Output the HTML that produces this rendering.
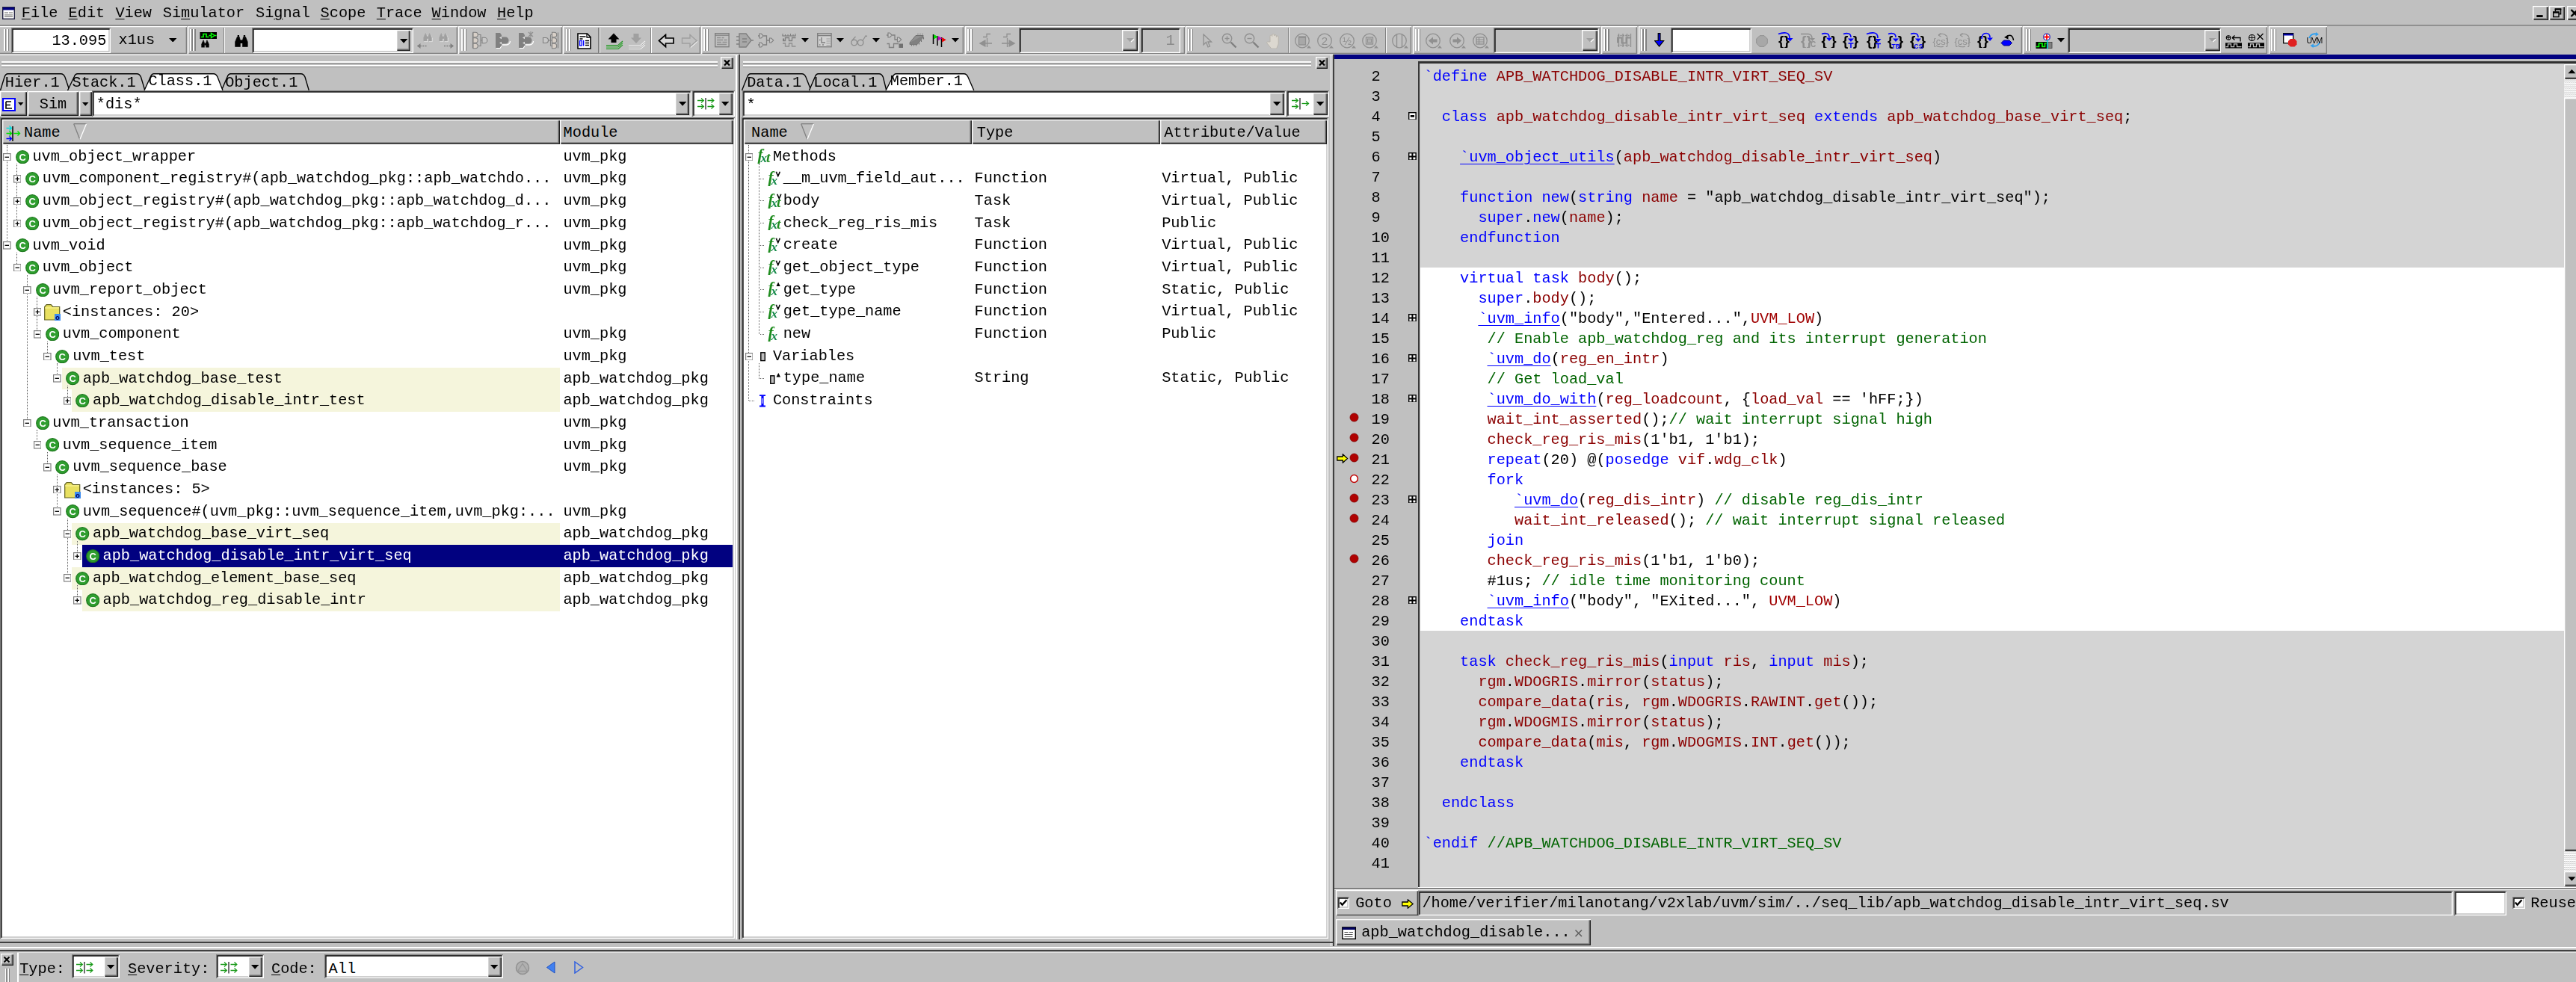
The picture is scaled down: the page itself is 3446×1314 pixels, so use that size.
<!DOCTYPE html><html><head><meta charset="utf-8"><title>DVE</title><style>
html,body{margin:0;padding:0;background:#c0c0c0;}
body{width:3446px;height:1314px;overflow:hidden;position:relative;font-family:"Liberation Mono",monospace;font-size:20.25px;color:#000;}
div{position:absolute;box-sizing:border-box;}
.t{white-space:pre;}
.sunk{border:1.35px solid;border-color:#808080 #fff #fff #808080;}
.sunk2{border:1.35px solid;border-color:#000 #c0c0c0 #c0c0c0 #000;}
.rais{border:1.35px solid;border-color:#fff #808080 #808080 #fff;}
.rais2{border:1.35px solid;border-color:#fff #000 #000 #fff;}
u{text-decoration:underline;text-underline-offset:2px;text-decoration-thickness:1.35px;}
.k{color:#0000ff}.i{color:#8b0000}.c{color:#006400}.m{color:#0000ff;text-decoration:underline;text-underline-offset:3px;text-decoration-thickness:1.35px}.r{color:#a00000}
</style></head><body><div id="root" style="left:0;top:0;width:3446px;height:1314px;opacity:0.999;overflow:hidden"><svg style="position:absolute;left:3.00px;top:9.00px;" width="17" height="17" viewBox="0 0 17 17"><rect x="0.7" y="0.7" width="15.6" height="15.6" fill="#fff" stroke="#202040" stroke-width="1.4"/><rect x="1" y="1" width="15" height="3.4" fill="#000080"/><path d="M3 8h5M9 8h5M3 11h11M3 13.5h11" stroke="#606060" stroke-width="1.2"/></svg><div class="t" style="left:28.80px;top:3.50px;height:27px;line-height:27px;"><u>F</u>ile</div><div class="t" style="left:91.60px;top:3.50px;height:27px;line-height:27px;"><u>E</u>dit</div><div class="t" style="left:154.40px;top:3.50px;height:27px;line-height:27px;"><u>V</u>iew</div><div class="t" style="left:217.80px;top:3.50px;height:27px;line-height:27px;">Si<u>m</u>ulator</div><div class="t" style="left:342.00px;top:3.50px;height:27px;line-height:27px;">Si<u>g</u>nal</div><div class="t" style="left:428.60px;top:3.50px;height:27px;line-height:27px;"><u>S</u>cope</div><div class="t" style="left:503.80px;top:3.50px;height:27px;line-height:27px;"><u>T</u>race</div><div class="t" style="left:577.60px;top:3.50px;height:27px;line-height:27px;"><u>W</u>indow</div><div class="t" style="left:665.00px;top:3.50px;height:27px;line-height:27px;"><u>H</u>elp</div><div class="" style="left:3387.70px;top:7.60px;width:21.50px;height:19.10px;background:#c0c0c0;box-shadow:inset 1.35px 1.35px 0 #fff,inset -1.35px -1.35px 0 #202020,inset -2.7px -2.7px 0 #808080;"></div><div class="" style="left:3409.60px;top:7.60px;width:21.50px;height:19.10px;background:#c0c0c0;box-shadow:inset 1.35px 1.35px 0 #fff,inset -1.35px -1.35px 0 #202020,inset -2.7px -2.7px 0 #808080;"></div><div class="" style="left:3433.80px;top:7.60px;width:21.50px;height:19.10px;background:#c0c0c0;box-shadow:inset 1.35px 1.35px 0 #fff,inset -1.35px -1.35px 0 #202020,inset -2.7px -2.7px 0 #808080;"></div><svg style="position:absolute;left:3387.70px;top:7.60px;" width="22" height="19" viewBox="0 0 22 19"><rect x="5.3" y="12.1" width="8.3" height="2.9" fill="#000"/></svg><svg style="position:absolute;left:3409.60px;top:7.60px;" width="22" height="19" viewBox="0 0 22 19"><path d="M8.4 7.4v-3.300h7.200v6.600h-2.300" fill="none" stroke="#000" stroke-width="1.400"/><rect x="7.700" y="3.300" width="8.600" height="2.200" fill="#000"/><rect x="5.700" y="8.200" width="7.300" height="6.400" fill="none" stroke="#000" stroke-width="1.400"/><rect x="5" y="7.400" width="8.700" height="2.300" fill="#000"/></svg><svg style="position:absolute;left:3433.80px;top:7.60px;" width="22" height="19" viewBox="0 0 22 19"><path d="M5.500 5l9 9M14.500 5l-9 9" stroke="#000" stroke-width="2.400"/></svg><div class="" style="left:0.00px;top:33.00px;width:3446.00px;height:1.60px;background:#909090"></div><div class="" style="left:0.00px;top:72.50px;width:3446.00px;height:1.60px;background:#fff"></div><div class="" style="left:-2.00px;top:35.00px;width:251.50px;height:37.10px;box-shadow:inset 1.35px 1.35px 0 #fff,inset -1.35px -1.35px 0 #808080;"></div><div class="" style="left:250.50px;top:35.00px;width:361.90px;height:37.10px;box-shadow:inset 1.35px 1.35px 0 #fff,inset -1.35px -1.35px 0 #808080;"></div><div class="" style="left:613.40px;top:35.00px;width:138.20px;height:37.10px;box-shadow:inset 1.35px 1.35px 0 #fff,inset -1.35px -1.35px 0 #808080;"></div><div class="" style="left:753.00px;top:35.00px;width:184.00px;height:37.10px;box-shadow:inset 1.35px 1.35px 0 #fff,inset -1.35px -1.35px 0 #808080;"></div><div class="" style="left:938.00px;top:35.00px;width:351.20px;height:37.10px;box-shadow:inset 1.35px 1.35px 0 #fff,inset -1.35px -1.35px 0 #808080;"></div><div class="" style="left:1290.60px;top:35.00px;width:294.00px;height:37.10px;box-shadow:inset 1.35px 1.35px 0 #fff,inset -1.35px -1.35px 0 #808080;"></div><div class="" style="left:1585.80px;top:35.00px;width:302.40px;height:37.10px;box-shadow:inset 1.35px 1.35px 0 #fff,inset -1.35px -1.35px 0 #808080;"></div><div class="" style="left:1889.60px;top:35.00px;width:251.60px;height:37.10px;box-shadow:inset 1.35px 1.35px 0 #fff,inset -1.35px -1.35px 0 #808080;"></div><div class="" style="left:2142.30px;top:35.00px;width:48.10px;height:37.10px;box-shadow:inset 1.35px 1.35px 0 #fff,inset -1.35px -1.35px 0 #808080;"></div><div class="" style="left:2191.80px;top:35.00px;width:513.40px;height:37.10px;box-shadow:inset 1.35px 1.35px 0 #fff,inset -1.35px -1.35px 0 #808080;"></div><div class="" style="left:2706.30px;top:35.00px;width:326.70px;height:37.10px;box-shadow:inset 1.35px 1.35px 0 #fff,inset -1.35px -1.35px 0 #808080;"></div><div class="" style="left:3034.60px;top:35.00px;width:78.60px;height:37.10px;box-shadow:inset 1.35px 1.35px 0 #fff,inset -1.35px -1.35px 0 #808080;"></div><div class="" style="left:4.90px;top:39.00px;width:2.00px;height:29.40px;background:#fff"></div><div class="" style="left:6.90px;top:39.00px;width:1.30px;height:29.40px;background:#808080"></div><div class="" style="left:9.00px;top:39.00px;width:2.00px;height:29.40px;background:#fff"></div><div class="" style="left:11.00px;top:39.00px;width:1.30px;height:29.40px;background:#808080"></div><div class="" style="left:254.30px;top:39.00px;width:2.00px;height:29.40px;background:#fff"></div><div class="" style="left:256.30px;top:39.00px;width:1.30px;height:29.40px;background:#808080"></div><div class="" style="left:258.40px;top:39.00px;width:2.00px;height:29.40px;background:#fff"></div><div class="" style="left:260.40px;top:39.00px;width:1.30px;height:29.40px;background:#808080"></div><div class="" style="left:617.10px;top:39.00px;width:2.00px;height:29.40px;background:#fff"></div><div class="" style="left:619.10px;top:39.00px;width:1.30px;height:29.40px;background:#808080"></div><div class="" style="left:621.20px;top:39.00px;width:2.00px;height:29.40px;background:#fff"></div><div class="" style="left:623.20px;top:39.00px;width:1.30px;height:29.40px;background:#808080"></div><div class="" style="left:756.50px;top:39.00px;width:2.00px;height:29.40px;background:#fff"></div><div class="" style="left:758.50px;top:39.00px;width:1.30px;height:29.40px;background:#808080"></div><div class="" style="left:760.60px;top:39.00px;width:2.00px;height:29.40px;background:#fff"></div><div class="" style="left:762.60px;top:39.00px;width:1.30px;height:29.40px;background:#808080"></div><div class="" style="left:941.10px;top:39.00px;width:2.00px;height:29.40px;background:#fff"></div><div class="" style="left:943.10px;top:39.00px;width:1.30px;height:29.40px;background:#808080"></div><div class="" style="left:945.20px;top:39.00px;width:2.00px;height:29.40px;background:#fff"></div><div class="" style="left:947.20px;top:39.00px;width:1.30px;height:29.40px;background:#808080"></div><div class="" style="left:1293.70px;top:39.00px;width:2.00px;height:29.40px;background:#fff"></div><div class="" style="left:1295.70px;top:39.00px;width:1.30px;height:29.40px;background:#808080"></div><div class="" style="left:1297.80px;top:39.00px;width:2.00px;height:29.40px;background:#fff"></div><div class="" style="left:1299.80px;top:39.00px;width:1.30px;height:29.40px;background:#808080"></div><div class="" style="left:1588.70px;top:39.00px;width:2.00px;height:29.40px;background:#fff"></div><div class="" style="left:1590.70px;top:39.00px;width:1.30px;height:29.40px;background:#808080"></div><div class="" style="left:1592.80px;top:39.00px;width:2.00px;height:29.40px;background:#fff"></div><div class="" style="left:1594.80px;top:39.00px;width:1.30px;height:29.40px;background:#808080"></div><div class="" style="left:1892.50px;top:39.00px;width:2.00px;height:29.40px;background:#fff"></div><div class="" style="left:1894.50px;top:39.00px;width:1.30px;height:29.40px;background:#808080"></div><div class="" style="left:1896.60px;top:39.00px;width:2.00px;height:29.40px;background:#fff"></div><div class="" style="left:1898.60px;top:39.00px;width:1.30px;height:29.40px;background:#808080"></div><div class="" style="left:2145.30px;top:39.00px;width:2.00px;height:29.40px;background:#fff"></div><div class="" style="left:2147.30px;top:39.00px;width:1.30px;height:29.40px;background:#808080"></div><div class="" style="left:2149.40px;top:39.00px;width:2.00px;height:29.40px;background:#fff"></div><div class="" style="left:2151.40px;top:39.00px;width:1.30px;height:29.40px;background:#808080"></div><div class="" style="left:2195.30px;top:39.00px;width:2.00px;height:29.40px;background:#fff"></div><div class="" style="left:2197.30px;top:39.00px;width:1.30px;height:29.40px;background:#808080"></div><div class="" style="left:2199.40px;top:39.00px;width:2.00px;height:29.40px;background:#fff"></div><div class="" style="left:2201.40px;top:39.00px;width:1.30px;height:29.40px;background:#808080"></div><div class="" style="left:2709.90px;top:39.00px;width:2.00px;height:29.40px;background:#fff"></div><div class="" style="left:2711.90px;top:39.00px;width:1.30px;height:29.40px;background:#808080"></div><div class="" style="left:2714.00px;top:39.00px;width:2.00px;height:29.40px;background:#fff"></div><div class="" style="left:2716.00px;top:39.00px;width:1.30px;height:29.40px;background:#808080"></div><div class="" style="left:3038.10px;top:39.00px;width:2.00px;height:29.40px;background:#fff"></div><div class="" style="left:3040.10px;top:39.00px;width:1.30px;height:29.40px;background:#808080"></div><div class="" style="left:3042.20px;top:39.00px;width:2.00px;height:29.40px;background:#fff"></div><div class="" style="left:3044.20px;top:39.00px;width:1.30px;height:29.40px;background:#808080"></div><div class="" style="left:15.00px;top:37.20px;width:133.00px;height:33.40px;background:#fff;box-shadow:inset 1.35px 1.35px 0 #808080,inset -1.35px -1.35px 0 #fff,inset 2.7px 2.7px 0 #101010,inset -2.7px -2.7px 0 #c0c0c0;"></div><div class="t" style="left:15.30px;top:40.50px;height:27px;line-height:27px;width:127px;text-align:right;">13.095</div><div class="t" style="left:158.50px;top:40.00px;height:27px;line-height:27px;">x1us</div><svg style="position:absolute;left:225.75px;top:50.70px;" width="10.5" height="5.6" viewBox="0 0 10.5 5.6"><polygon points="0,0 10.5,0 5.25,5.6" fill="#000"/></svg><svg style="position:absolute;left:267.00px;top:42.00px;" width="24" height="23" viewBox="0 0 24 23"><rect x="0.5" y="1" width="22.5" height="9" fill="#000"/><path d="M2 7.5h3v-4h4v4h3.5" stroke="#00ff00" stroke-width="1.7" fill="none"/><path d="M12.5 5.5h3M20.5 5.5h2" stroke="#00ff00" stroke-width="1.6"/><path d="M15.5 2.5v6l4.5-3z" fill="none" stroke="#00ff00" stroke-width="1.5"/><g transform="translate(1,10.5) scale(0.62)"><g transform="translate(0,0)" fill="#000" stroke="#000"><path d="M2.5 17.5 L2.5 11 L5 4.5 L8 4.5 L9 9 L9 17.5 Z" stroke-width="0.6"/><path d="M18.5 17.5 L18.5 11 L16 4.5 L13 4.5 L12 9 L12 17.5 Z" stroke-width="0.6"/><rect x="8.5" y="8.5" width="4" height="4.5" stroke="none"/><path d="M5.5 3h2.2M13.3 3h2.2" stroke-width="1.8" fill="none"/></g></g></svg><div class="" style="left:298.60px;top:36.50px;width:1.35px;height:34.30px;background:#808080"></div><div class="" style="left:299.95px;top:36.50px;width:1.35px;height:34.30px;background:#fff"></div><svg style="position:absolute;left:312.00px;top:44.50px;" width="22" height="20" viewBox="0 0 22 20"><g transform="scale(1.04,1.0)"><g transform="translate(0,0)" fill="#000" stroke="#000"><path d="M2.5 17.5 L2.5 11 L5 4.5 L8 4.5 L9 9 L9 17.5 Z" stroke-width="0.6"/><path d="M18.5 17.5 L18.5 11 L16 4.5 L13 4.5 L12 9 L12 17.5 Z" stroke-width="0.6"/><rect x="8.5" y="8.5" width="4" height="4.5" stroke="none"/><path d="M5.5 3h2.2M13.3 3h2.2" stroke-width="1.8" fill="none"/></g></g></svg><div class="" style="left:337.40px;top:37.20px;width:215.40px;height:33.40px;background:#fff;box-shadow:inset 1.35px 1.35px 0 #808080,inset -1.35px -1.35px 0 #fff,inset 2.7px 2.7px 0 #101010,inset -2.7px -2.7px 0 #c0c0c0;"></div><div class="" style="left:530.10px;top:40.00px;width:19.40px;height:28.40px;background:#c0c0c0;box-shadow:inset 1.35px 1.35px 0 #fff,inset -1.35px -1.35px 0 #202020,inset -2.7px -2.7px 0 #808080;"></div><svg style="position:absolute;left:534.70px;top:51.80px;" width="10.2" height="5.8" viewBox="0 0 10.2 5.8"><polygon points="0,0 10.2,0 5.1,5.8" fill="#000"/></svg><svg style="position:absolute;left:556.50px;top:43.00px;" width="24" height="24" viewBox="0 0 24 24"><g transform="translate(8,0) scale(0.68)"><g transform="translate(1.2,1.2)" fill="#e8e8e8" stroke="#e8e8e8"><path d="M2.5 17.5 L2.5 11 L5 4.5 L8 4.5 L9 9 L9 17.5 Z" stroke-width="0.6"/><path d="M18.5 17.5 L18.5 11 L16 4.5 L13 4.5 L12 9 L12 17.5 Z" stroke-width="0.6"/><rect x="8.5" y="8.5" width="4" height="4.5" stroke="none"/><path d="M5.5 3h2.2M13.3 3h2.2" stroke-width="1.8" fill="none"/></g><g transform="translate(0,0)" fill="#a0a0a0" stroke="#a0a0a0"><path d="M2.5 17.5 L2.5 11 L5 4.5 L8 4.5 L9 9 L9 17.5 Z" stroke-width="0.6"/><path d="M18.5 17.5 L18.5 11 L16 4.5 L13 4.5 L12 9 L12 17.5 Z" stroke-width="0.6"/><rect x="8.5" y="8.5" width="4" height="4.5" stroke="none"/><path d="M5.5 3h2.2M13.3 3h2.2" stroke-width="1.8" fill="none"/></g></g><path d="M1.5 18.5h12" stroke="#808080" stroke-width="1.3" stroke-dasharray="2 1.4"/><path d="M5.5 15l-4.5 3.5l4.5 3.5z" fill="#808080"/></svg><svg style="position:absolute;left:585.00px;top:43.00px;" width="24" height="24" viewBox="0 0 24 24"><g transform="translate(1,0) scale(0.68)"><g transform="translate(1.2,1.2)" fill="#e8e8e8" stroke="#e8e8e8"><path d="M2.5 17.5 L2.5 11 L5 4.5 L8 4.5 L9 9 L9 17.5 Z" stroke-width="0.6"/><path d="M18.5 17.5 L18.5 11 L16 4.5 L13 4.5 L12 9 L12 17.5 Z" stroke-width="0.6"/><rect x="8.5" y="8.5" width="4" height="4.5" stroke="none"/><path d="M5.5 3h2.2M13.3 3h2.2" stroke-width="1.8" fill="none"/></g><g transform="translate(0,0)" fill="#a0a0a0" stroke="#a0a0a0"><path d="M2.5 17.5 L2.5 11 L5 4.5 L8 4.5 L9 9 L9 17.5 Z" stroke-width="0.6"/><path d="M18.5 17.5 L18.5 11 L16 4.5 L13 4.5 L12 9 L12 17.5 Z" stroke-width="0.6"/><rect x="8.5" y="8.5" width="4" height="4.5" stroke="none"/><path d="M5.5 3h2.2M13.3 3h2.2" stroke-width="1.8" fill="none"/></g></g><path d="M9 18.5h12" stroke="#808080" stroke-width="1.3" stroke-dasharray="2 1.4"/><path d="M17.5 15l4.5 3.5l-4.5 3.5z" fill="#808080"/></svg><svg style="position:absolute;left:631.00px;top:42.00px;" width="22" height="24" viewBox="0 0 22 24"><path d="M1.5 1.5v21" stroke="#808080" stroke-width="1.3"/><path d="M2 1.2999999999999998h3a3.2 3.2 0 0 1 0 6.4h-3z" fill="#d8d0c8" stroke="#808080" stroke-width="1.1"/><path d="M2 8.8h3a3.2 3.2 0 0 1 0 6.4h-3z" fill="#d8d0c8" stroke="#808080" stroke-width="1.1"/><path d="M2 16.3h3a3.2 3.2 0 0 1 0 6.4h-3z" fill="#d8d0c8" stroke="#808080" stroke-width="1.1"/><path d="M9 4.5h3v15h-3M12 12h2" stroke="#808080" stroke-width="1.1" fill="none"/><path d="M14 8.2h3a3.8 3.8 0 0 1 0 7.6h-3z" fill="#c8c8c8" stroke="#808080" stroke-width="1.1"/></svg><svg style="position:absolute;left:662.00px;top:42.00px;" width="22" height="24" viewBox="0 0 22 24"><path d="M1 2h6l2 3v14l-2 3h-6z" fill="#808080"/><path d="M9 7.5h5a4.5 4.5 0 0 1 0 9h-5z" fill="#808080"/><path d="M10 18h5.5a5 5 0 0 0 5-5" stroke="#fff" stroke-width="1.3" fill="none"/><path d="M6 8.5l3-1.7v3.4zM6 15.5l3-1.7v3.4z" fill="#e0e0e0"/><path d="M2 22.5h5l2-3" stroke="#fff" stroke-width="1.2" fill="none"/></svg><svg style="position:absolute;left:693.00px;top:42.00px;" width="23" height="24" viewBox="0 0 23 24"><path d="M1 2h6l2 3v14l-2 3h-6z" fill="#808080"/><path d="M9 7.5h5a4.5 4.5 0 0 1 0 9h-5z" fill="#808080"/><path d="M10 18h5.5a5 5 0 0 0 5-5" stroke="#fff" stroke-width="1.3" fill="none"/><path d="M6 8.5l3-1.7v3.4zM6 15.5l3-1.7v3.4z" fill="#e0e0e0"/><path d="M2 22.5h5l2-3" stroke="#fff" stroke-width="1.2" fill="none"/><path d="M14 1l6 6M20 1l-6 6M17 0v8" stroke="#909090" stroke-width="1.2"/></svg><svg style="position:absolute;left:724.50px;top:42.00px;" width="23" height="24" viewBox="0 0 23 24"><path d="M1.5 8.5h3.5a3.5 3.5 0 0 1 0 7h-3.5z" fill="#c8c8c8" stroke="#808080" stroke-width="1.1"/><path d="M8.5 12h3M11.5 4.5v15M11.5 4.5h2M11.5 19.5h2M11.5 12h2" stroke="#808080" stroke-width="1.1" fill="none"/><path d="M13.5 1.2999999999999998h3a3.2 3.2 0 0 1 0 6.4h-3z" fill="#d8d0c8" stroke="#808080" stroke-width="1.1"/><path d="M13.5 8.8h3a3.2 3.2 0 0 1 0 6.4h-3z" fill="#d8d0c8" stroke="#808080" stroke-width="1.1"/><path d="M13.5 16.3h3a3.2 3.2 0 0 1 0 6.4h-3z" fill="#d8d0c8" stroke="#808080" stroke-width="1.1"/><path d="M21.5 1.5v21" stroke="#808080" stroke-width="1.2"/></svg><svg style="position:absolute;left:772.00px;top:43.50px;" width="20" height="22" viewBox="0 0 20 22"><path d="M1 1h12.5l4.5 4.5v15.5h-17z" fill="#fff" stroke="#000" stroke-width="1.6"/><path d="M13 1v5h5" fill="none" stroke="#000" stroke-width="1.3"/><path d="M3.5 5h8M3.5 8h4" stroke="#000" stroke-width="1.5"/><path d="M11 10.5h5M11 13.5h5M11 16.5h5" stroke="#000" stroke-width="1.3"/><rect x="3.6" y="10.5" width="2.6" height="6.5" fill="none" stroke="#0000ff" stroke-width="1.3"/><path d="M8.6 10v7.5" stroke="#0000ff" stroke-width="1.5"/></svg><div class="" style="left:800.40px;top:36.50px;width:1.35px;height:34.30px;background:#808080"></div><div class="" style="left:801.75px;top:36.50px;width:1.35px;height:34.30px;background:#fff"></div><svg style="position:absolute;left:809.50px;top:42.50px;" width="24" height="24" viewBox="0 0 24 24"><path d="M3.5 9.5l7.5-8l7.5 8h-4v4.5h-7v-4.5z" fill="#000"/><path d="M1 17.5h16l6-5.5M1 20h16l6-5.5M1 22.5h16l6-5.5" stroke="#228b22" stroke-width="1.2" fill="none"/><path d="M1 18.7h16l6-5.5M1 21.2h16l6-5.5" stroke="#90d090" stroke-width="1.0" fill="none"/></svg><svg style="position:absolute;left:840.00px;top:42.50px;" width="24" height="24" viewBox="0 0 24 24"><path d="M4 7.5l7 7.5l7-7.5h-3.500v-5.500h-7v5.500z" fill="#a0a0a0"/><path d="M1 17.5h16l6-5.5M1 20h16l6-5.5M1 22.5h16l6-5.5" stroke="#f0f0f0" stroke-width="1.2" fill="none"/><path d="M1 18.7h16l6-5.5M1 21.2h16l6-5.5" stroke="#b0b0b0" stroke-width="1.0" fill="none"/></svg><div class="" style="left:869.80px;top:36.50px;width:1.35px;height:34.30px;background:#808080"></div><div class="" style="left:871.15px;top:36.50px;width:1.35px;height:34.30px;background:#fff"></div><svg style="position:absolute;left:880.00px;top:44.50px;" width="23" height="20" viewBox="0 0 23 20"><path d="M1.5 9.5l9-8v4.5h10.5v7h-10.5v4.5z" fill="#d8d8d8" stroke="#000" stroke-width="1.7" stroke-linejoin="miter"/></svg><svg style="position:absolute;left:911.00px;top:44.50px;" width="23" height="20" viewBox="0 0 23 20"><path d="M21 9.5l-9-8v4.5h-10.5v7h10.5v4.5z" fill="none" stroke="#a0a0a0" stroke-width="1.4"/><path d="M22 10.5l-9 8" stroke="#fff" stroke-width="1"/></svg><svg style="position:absolute;left:956.00px;top:44.00px;" width="20" height="19.5" viewBox="0 0 20 19.5"><rect x="0.7" y="0.7" width="18.4" height="18" fill="none" stroke="#808080" stroke-width="1.4"/><path d="M1 3.2h18" stroke="#808080" stroke-width="1.2"/><path d="M3 6.5h5M9.5 6.5h3M3 9.5h8M12.5 9.5h4M3 12.5h6M10.5 12.5h6M3 15.5h13" stroke="#909090" stroke-width="1.5"/></svg><svg style="position:absolute;left:984.50px;top:43.50px;" width="23" height="20" viewBox="0 0 23 20"><path d="M4 1h9l7 9l-7 9h-9z" fill="#a8a8a8" stroke="#808080" stroke-width="1.4"/><path d="M0 5h4M0 10h4M0 15h4M20 10h3" stroke="#808080" stroke-width="1.3"/><path d="M8 8h6M8 12h6" stroke="#808080" stroke-width="1.5"/></svg><svg style="position:absolute;left:1014.00px;top:43.50px;" width="23" height="20" viewBox="0 0 23 20"><path d="M2 1.0h2.2l3.0 3.0l-3.0 3.0h-2.2z" fill="#c8c8c8" stroke="#808080" stroke-width="1.2"/><path d="M2 13.0h2.2l3.0 3.0l-3.0 3.0h-2.2z" fill="#c8c8c8" stroke="#808080" stroke-width="1.2"/><path d="M0 4h2M0 16h2M7.5 4h4v12h-4M11.5 10h4" stroke="#808080" stroke-width="1.3" fill="none"/><path d="M15.5 7.0h2.2l3.0 3.0l-3.0 3.0h-2.2z" fill="#c8c8c8" stroke="#808080" stroke-width="1.2"/></svg><svg style="position:absolute;left:1045.50px;top:43.50px;" width="19" height="20" viewBox="0 0 19 20"><path d="M0.5 4h18" stroke="#808080" stroke-width="1.2"/><path d="M1 1v3M4.5 2v2M8 2v2M11.5 1v3M15 2v2M18 1v3" stroke="#808080" stroke-width="1.1"/><path d="M1 10.5h3.5v-4h5v4h4v-4h5" stroke="#808080" stroke-width="1.3" fill="none"/><rect x="1" y="7.5" width="2.2" height="3" fill="#808080"/><path d="M1 14h3.5v4h5v-4h4v4h5" stroke="#909090" stroke-width="1.3" fill="none"/></svg><svg style="position:absolute;left:1072.20px;top:51.05px;" width="10" height="5.5" viewBox="0 0 10 5.5"><polygon points="0,0 10,0 5.0,5.5" fill="#000"/></svg><svg style="position:absolute;left:1092.60px;top:44.00px;" width="20" height="19.5" viewBox="0 0 20 19.5"><rect x="0.7" y="0.7" width="18.4" height="18" fill="#d0d0d0" stroke="#808080" stroke-width="1.4"/><path d="M1 3.5h18" stroke="#808080" stroke-width="1.6"/><path d="M6 6v7h5M3 9.5h1.5M3 16h1.5M7 16h2" stroke="#808080" stroke-width="1.4" fill="none"/><path d="M12.5 8h5M12.5 11h5M12.5 14h5M12.5 16.5h5" stroke="#a0a0a0" stroke-width="1.1"/></svg><svg style="position:absolute;left:1119.40px;top:51.05px;" width="10" height="5.5" viewBox="0 0 10 5.5"><polygon points="0,0 10,0 5.0,5.5" fill="#000"/></svg><svg style="position:absolute;left:1138.00px;top:45.50px;" width="23" height="16" viewBox="0 0 23 16"><circle cx="4.7" cy="11" r="3.8" fill="none" stroke="#909090" stroke-width="1.4"/><circle cx="13.2" cy="11" r="3.8" fill="none" stroke="#909090" stroke-width="1.4"/><path d="M8.3 10.5h1.4M1.5 8.5l5-5.5M16 8.5l4-6.5l2 0.5" stroke="#909090" stroke-width="1.3" fill="none"/></svg><svg style="position:absolute;left:1166.60px;top:51.05px;" width="10" height="5.5" viewBox="0 0 10 5.5"><polygon points="0,0 10,0 5.0,5.5" fill="#000"/></svg><svg style="position:absolute;left:1185.50px;top:43.00px;" width="23" height="22" viewBox="0 0 23 22"><path d="M2 1.0h2.2l3.0 3.0l-3.0 3.0h-2.2z" fill="#c8c8c8" stroke="#808080" stroke-width="1.2"/><path d="M0 4h2M7.5 4h3.5v6h4" stroke="#808080" stroke-width="1.3" fill="none"/><path d="M14.5 7.0h2.2l3.0 3.0l-3.0 3.0h-2.2z" fill="#c8c8c8" stroke="#808080" stroke-width="1.2"/><path d="M0.5 15.5h3v5h6v-5h6.5" stroke="#808080" stroke-width="1.3" fill="none"/><rect x="16.5" y="15.5" width="5.5" height="5.5" fill="#707070"/></svg><svg style="position:absolute;left:1215.50px;top:45.00px;" width="22" height="18" viewBox="0 0 22 18"><path d="M1 12l8-9.5h10l-8 9.5z" fill="#909090" stroke="#707070" stroke-width="1"/><path d="M1 12v2.5h10l8-9.5v-2.5" fill="#808080" stroke="#707070" stroke-width="0.8"/><path d="M3.5 14.5v2M6.5 14.5v2M9.5 14.5v2M13.5 12v2.5M16.5 8.5v2.5M19.5 5v2.5M11.5 1l1-1M14.5 1l1-1M17.5 1l1-1" stroke="#707070" stroke-width="1.1"/></svg><svg style="position:absolute;left:1246.50px;top:45.00px;" width="19" height="18" viewBox="0 0 19 18"><path d="M1.5 1v13M7 3v13M12.5 5v13" stroke="#000" stroke-width="1.5"/><path d="M2.2 1l5.5 3.2l-5.5 3.2z" fill="#00dd00"/><path d="M7.7 3l5.5 3.2l-5.5 3.2z" fill="#c000c0"/><path d="M13.2 5l5.5 3.2l-5.5 3.2z" fill="#ee0000"/></svg><svg style="position:absolute;left:1272.80px;top:51.05px;" width="10" height="5.5" viewBox="0 0 10 5.5"><polygon points="0,0 10,0 5.0,5.5" fill="#000"/></svg><svg style="position:absolute;left:1308.50px;top:43.00px;" width="19" height="22" viewBox="0 0 19 22"><path d="M6 6.5h5v-4h5" stroke="#909090" stroke-width="1.3" fill="none"/><path d="M0.5 15l9-5v10z" fill="#909090"/><path d="M9 15h9M11.5 8v12" stroke="#909090" stroke-width="1.3"/></svg><svg style="position:absolute;left:1338.50px;top:43.00px;" width="20" height="22" viewBox="0 0 20 22"><path d="M3 6.5h5v-4h5" stroke="#909090" stroke-width="1.3" fill="none"/><path d="M19.5 15l-9-5v10z" fill="#909090"/><path d="M1 15h10M8.5 8v12" stroke="#909090" stroke-width="1.3"/></svg><div class="" style="left:1363.20px;top:37.20px;width:160.50px;height:33.40px;background:#c0c0c0;box-shadow:inset 1.35px 1.35px 0 #808080,inset -1.35px -1.35px 0 #fff,inset 2.7px 2.7px 0 #101010,inset -2.7px -2.7px 0 #c0c0c0;"></div><div class="" style="left:1500.60px;top:40.20px;width:21.00px;height:27.80px;background:#c0c0c0;box-shadow:inset 1.35px 1.35px 0 #fff,inset -1.35px -1.35px 0 #202020,inset -2.7px -2.7px 0 #808080;"></div><svg style="position:absolute;left:1506.55px;top:51.40px;" width="9.5" height="5.2" viewBox="0 0 9.5 5.2"><polygon points="0,0 9.5,0 4.75,5.2" fill="#a0a0a0"/></svg><svg style="position:absolute;left:1511.50px;top:51.00px;" width="8" height="6" viewBox="0 0 8 6"><path d="M1 5l4-3.5" stroke="#fff" stroke-width="1.3"/></svg><div class="" style="left:1525.60px;top:37.20px;width:53.60px;height:33.40px;background:#c0c0c0;box-shadow:inset 1.35px 1.35px 0 #808080,inset -1.35px -1.35px 0 #fff,inset 2.7px 2.7px 0 #101010,inset -2.7px -2.7px 0 #c0c0c0;"></div><div class="t" style="left:1525.60px;top:40.50px;height:27px;line-height:27px;width:46px;text-align:right;color:#8a8a8a;">1</div><svg style="position:absolute;left:1609.00px;top:44.50px;" width="13" height="20" viewBox="0 0 13 20"><path d="M1 1v14l3.5-3.5l2.5 6.5l2.5-1l-2.5-6h4.5z" fill="none" stroke="#909090" stroke-width="1.3"/></svg><svg style="position:absolute;left:1633.50px;top:44.00px;" width="21" height="21" viewBox="0 0 21 21"><circle cx="7.5" cy="7.5" r="6.2" fill="none" stroke="#909090" stroke-width="1.4"/><path d="M12.5 12.5l7 7" stroke="#808080" stroke-width="2.4"/><path d="M4.5 7.5h6" stroke="#909090" stroke-width="1.4"/><path d="M7.5 4.5v6" stroke="#909090" stroke-width="1.4"/></svg><svg style="position:absolute;left:1663.50px;top:44.00px;" width="21" height="21" viewBox="0 0 21 21"><circle cx="7.5" cy="7.5" r="6.2" fill="none" stroke="#909090" stroke-width="1.4"/><path d="M12.5 12.5l7 7" stroke="#808080" stroke-width="2.4"/><path d="M4.5 7.5h6" stroke="#909090" stroke-width="1.4"/></svg><svg style="position:absolute;left:1692.50px;top:44.50px;" width="22" height="20" viewBox="0 0 22 20"><path d="M6 11v-7.5a1.4 1.4 0 0 1 2.8 0v-1.5a1.4 1.4 0 0 1 2.8 0v1a1.4 1.4 0 0 1 2.8 0v1.5a1.4 1.4 0 0 1 2.8 0v9.5l-2.5 6h-7l-6-7.5a1.5 1.5 0 0 1 2.3-1.5z" fill="#dcd8d0" stroke="#b8b4ac" stroke-width="1"/></svg><div class="" style="left:1722.60px;top:36.50px;width:1.35px;height:34.30px;background:#808080"></div><div class="" style="left:1723.95px;top:36.50px;width:1.35px;height:34.30px;background:#fff"></div><svg style="position:absolute;left:1732.00px;top:43.50px;" width="23" height="22" viewBox="0 0 23 22"><circle cx="10" cy="10.5" r="9.3" fill="none" stroke="#909090" stroke-width="1.3"/><path d="M16 20.5l3-3.5l3 3.5z" fill="#909090"/><rect x="5.5" y="5" width="9" height="11" fill="#a8a8a8" stroke="#909090" stroke-width="1.3"/><path d="M5.5 6h9" stroke="#909090" stroke-width="1.6"/></svg><svg style="position:absolute;left:1761.50px;top:43.50px;" width="23" height="22" viewBox="0 0 23 22"><circle cx="10" cy="10.5" r="9.3" fill="none" stroke="#909090" stroke-width="1.3"/><path d="M16 20.5l3-3.5l3 3.5z" fill="#909090"/><text x="10" y="16" font-size="15" text-anchor="middle" fill="#909090" font-family="Liberation Sans,sans-serif">2</text></svg><svg style="position:absolute;left:1791.50px;top:43.50px;" width="23" height="22" viewBox="0 0 23 22"><circle cx="10" cy="10.5" r="9.3" fill="none" stroke="#909090" stroke-width="1.3"/><path d="M16 20.5l3-3.5l3 3.5z" fill="#909090"/><text x="10" y="15.5" font-size="14" text-anchor="middle" fill="#909090" font-family="Liberation Sans,sans-serif">½</text></svg><svg style="position:absolute;left:1821.50px;top:43.50px;" width="23" height="22" viewBox="0 0 23 22"><circle cx="10" cy="10.5" r="9.3" fill="none" stroke="#909090" stroke-width="1.3"/><path d="M16 20.5l3-3.5l3 3.5z" fill="#909090"/><rect x="5.5" y="6" width="9" height="9" fill="none" stroke="#909090" stroke-width="1.3"/><rect x="7.5" y="8" width="5" height="5" fill="#b0b0b0" stroke="#909090" stroke-width="1"/></svg><div class="" style="left:1852.60px;top:36.50px;width:1.35px;height:34.30px;background:#808080"></div><div class="" style="left:1853.95px;top:36.50px;width:1.35px;height:34.30px;background:#fff"></div><svg style="position:absolute;left:1862.00px;top:43.50px;" width="23" height="22" viewBox="0 0 23 22"><circle cx="10" cy="10.5" r="9.3" fill="none" stroke="#909090" stroke-width="1.3"/><path d="M16 20.5l3-3.5l3 3.5z" fill="#909090"/><path d="M6.5 2v17M13.5 2v17" stroke="#909090" stroke-width="1.4"/></svg><svg style="position:absolute;left:1906.50px;top:43.50px;" width="23" height="22" viewBox="0 0 23 22"><circle cx="10" cy="10.5" r="9.3" fill="none" stroke="#909090" stroke-width="1.3"/><path d="M16 20.5l3-3.5l3 3.5z" fill="#909090"/><path d="M4 10.5l6-5v3h5.5v4h-5.5v3z" fill="#909090"/></svg><svg style="position:absolute;left:1939.00px;top:43.50px;" width="23" height="22" viewBox="0 0 23 22"><circle cx="10" cy="10.5" r="9.3" fill="none" stroke="#909090" stroke-width="1.3"/><path d="M16 20.5l3-3.5l3 3.5z" fill="#909090"/><path d="M16 10.5l-6-5v3h-5.5v4h5.5v3z" fill="#909090"/></svg><svg style="position:absolute;left:1970.00px;top:43.50px;" width="23" height="22" viewBox="0 0 23 22"><circle cx="10" cy="10.5" r="9.3" fill="none" stroke="#909090" stroke-width="1.3"/><path d="M16 20.5l3-3.5l3 3.5z" fill="#909090"/><rect x="5" y="6" width="10" height="9" fill="none" stroke="#909090" stroke-width="1.3"/><path d="M5 9h10M5 12h10M8.5 6v9" stroke="#909090" stroke-width="1.2"/></svg><div class="" style="left:1998.40px;top:37.20px;width:140.40px;height:33.40px;background:#c0c0c0;box-shadow:inset 1.35px 1.35px 0 #808080,inset -1.35px -1.35px 0 #fff,inset 2.7px 2.7px 0 #101010,inset -2.7px -2.7px 0 #c0c0c0;"></div><div class="" style="left:2116.20px;top:40.20px;width:21.00px;height:27.80px;background:#c0c0c0;box-shadow:inset 1.35px 1.35px 0 #fff,inset -1.35px -1.35px 0 #202020,inset -2.7px -2.7px 0 #808080;"></div><svg style="position:absolute;left:2122.05px;top:51.40px;" width="9.5" height="5.2" viewBox="0 0 9.5 5.2"><polygon points="0,0 9.5,0 4.75,5.2" fill="#a0a0a0"/></svg><svg style="position:absolute;left:2126.50px;top:51.00px;" width="8" height="6" viewBox="0 0 8 6"><path d="M1 5l4-3.5" stroke="#fff" stroke-width="1.3"/></svg><svg style="position:absolute;left:2163.00px;top:44.00px;" width="20" height="20" viewBox="0 0 20 20"><path d="M1 3.5h18M1 16.5h18" stroke="#909090" stroke-width="1.3" stroke-dasharray="2.2 1.2"/><path d="M1 13.5v-7h5.5v7h6v-7h6.5" stroke="#909090" stroke-width="2" fill="none"/><path d="M2.5 1v18M8 1v18M13.5 1v18M18.5 1v18" stroke="#909090" stroke-width="1.3"/></svg><svg style="position:absolute;left:2213.00px;top:43.50px;" width="14" height="19" viewBox="0 0 14 19"><path d="M5.2 0.6h2.800v9.900h4.600l-6 7.500l-6-7.500h4.600z" fill="#0000ff" stroke="#000" stroke-width="1.2"/></svg><div class="" style="left:2235.00px;top:37.20px;width:107.60px;height:33.40px;background:#fff;box-shadow:inset 1.35px 1.35px 0 #808080,inset -1.35px -1.35px 0 #fff,inset 2.7px 2.7px 0 #101010,inset -2.7px -2.7px 0 #c0c0c0;"></div><svg style="position:absolute;left:2349.00px;top:46.50px;" width="16" height="16" viewBox="0 0 16 16"><path d="M5 0.7h6l4.3 4.3v6l-4.3 4.3h-6l-4.3-4.3v-6z" fill="#a8a8a8" stroke="#909090" stroke-width="1"/></svg><svg style="position:absolute;left:2377.50px;top:43.00px;" width="22" height="21" viewBox="0 0 22 21"><text x="1" y="18" font-size="19" font-weight="bold" fill="#000" font-family="Liberation Sans,sans-serif" letter-spacing="0">{}</text><path d="M1 2.5q5-2 10-1.5q5 0.5 5 7" stroke="#0000ff" stroke-width="1.6" fill="none"/><path d="M12.5 8h8l-4 4.5z" fill="#0000ff"/></svg><svg style="position:absolute;left:2407.50px;top:43.00px;" width="22" height="21" viewBox="0 0 22 21"><text x="1" y="18" font-size="19" font-weight="bold" fill="#909090" font-family="Liberation Sans,sans-serif" letter-spacing="0">{}</text><path d="M1 2.5h10q5 0.5 5 6" stroke="#909090" stroke-width="1.4" fill="none"/><path d="M13 8h7l-3.5 4z" fill="#909090"/><text x="14" y="20" font-size="10" font-weight="bold" fill="#909090" font-family="Liberation Sans,sans-serif">C</text></svg><svg style="position:absolute;left:2435.50px;top:43.00px;" width="22" height="21" viewBox="0 0 22 21"><text x="0.5" y="18" font-size="19" font-weight="bold" fill="#000" font-family="Liberation Sans,sans-serif" letter-spacing="0">{ }</text><path d="M1 2.5q4-1.5 7-0.5q3 1 3 5" stroke="#0000ff" stroke-width="1.6" fill="none"/><path d="M7 7.5h8l-4 4.5z" fill="#0000ff"/></svg><svg style="position:absolute;left:2465.00px;top:43.00px;" width="23" height="22" viewBox="0 0 23 22"><text x="0" y="18" font-size="19" font-weight="bold" fill="#000" font-family="Liberation Sans,sans-serif" letter-spacing="0.5">{ }</text><path d="M1 2.5q4-1.5 7-0.5q3 1 3 5" stroke="#0000ff" stroke-width="1.6" fill="none"/><path d="M7 8.5h8l-4 4.5z" fill="#0000ff"/><path d="M7.5 15h7M11 15v6" stroke="#0000ff" stroke-width="1.6"/></svg><svg style="position:absolute;left:2496.00px;top:43.00px;" width="23" height="22" viewBox="0 0 23 22"><text x="1" y="18" font-size="19" font-weight="bold" fill="#000" font-family="Liberation Sans,sans-serif" letter-spacing="0">{}</text><path d="M1 2.5q5-2 10-1.5q5 0.5 5 7" stroke="#0000ff" stroke-width="1.6" fill="none"/><path d="M12.5 9h8l-4 4.5z" fill="#0000ff"/><path d="M13 15.5h7M16.5 15.5v6" stroke="#0000ff" stroke-width="1.6"/></svg><svg style="position:absolute;left:2524.50px;top:43.00px;" width="23" height="22" viewBox="0 0 23 22"><text x="0" y="18" font-size="19" font-weight="bold" fill="#000" font-family="Liberation Sans,sans-serif" letter-spacing="0.5">{ }</text><path d="M1 2.5q4-1.5 7-0.5q3 1 3 5" stroke="#0000ff" stroke-width="1.6" fill="none"/><path d="M7 8.5h8l-4 4.5z" fill="#0000ff"/><text x="5.5" y="21.5" font-size="8.5" font-weight="bold" fill="#0000ff" font-family="Liberation Sans,sans-serif">TB</text></svg><svg style="position:absolute;left:2554.50px;top:43.00px;" width="23" height="22" viewBox="0 0 23 22"><text x="0" y="18" font-size="19" font-weight="bold" fill="#000" font-family="Liberation Sans,sans-serif" letter-spacing="0.5">{ }</text><path d="M1 2.5q4-1.5 7-0.5q3 1 3 5" stroke="#0000ff" stroke-width="1.6" fill="none"/><path d="M7 8.5h8l-4 4.5z" fill="#0000ff"/><text x="5.5" y="21.5" font-size="8.5" font-weight="bold" fill="#0000ff" font-family="Liberation Sans,sans-serif">CS</text></svg><svg style="position:absolute;left:2584.50px;top:43.00px;" width="23" height="22" viewBox="0 0 23 22"><text x="0.5" y="16.5" font-size="13" fill="#909090" font-family="Liberation Sans,sans-serif">{cs}</text><path d="M8 4q6-4 11 1q3 5 0 11M8 4l3.5-2.5M8 4l3.5 2M5 18q5 3 10 1" stroke="#909090" stroke-width="1.1" fill="none"/></svg><svg style="position:absolute;left:2614.00px;top:43.00px;" width="23" height="22" viewBox="0 0 23 22"><text x="0.5" y="16.5" font-size="13" fill="#909090" font-family="Liberation Sans,sans-serif">{cs}</text><path d="M8 4q6-4 11 1q3 5 0 11M8 4l3.5-2.5M8 4l3.5 2M5 18q5 3 10 1" stroke="#909090" stroke-width="1.1" fill="none"/></svg><svg style="position:absolute;left:2643.50px;top:43.00px;" width="23" height="21" viewBox="0 0 23 21"><text x="1" y="18" font-size="19" font-weight="bold" fill="#000" font-family="Liberation Sans,sans-serif" letter-spacing="0">{}</text><path d="M7 9q0-7.5 6-7.5q5 0 5 6" stroke="#0000ff" stroke-width="1.6" fill="none"/><path d="M14 7.5h8l-4 4.5z" fill="#0000ff"/></svg><svg style="position:absolute;left:2676.00px;top:43.50px;" width="19" height="21" viewBox="0 0 19 21"><path d="M4.5 10h7.5l3.5 3.5l-3.5 3.5h-7.500l-3.5-3.5z" fill="#0000ff" stroke="#000080" stroke-width="1"/><path d="M8 5q8-5 9.5 5" stroke="#000" stroke-width="1.5" fill="none"/><path d="M5 6l5.5-3.500v6z" fill="#000"/></svg><svg style="position:absolute;left:2723.00px;top:43.50px;" width="23" height="22" viewBox="0 0 23 22"><circle cx="15" cy="5.5" r="4.3" fill="#fff" stroke="#3030c0" stroke-width="1.3"/><path d="M15 2v7M11.500 5.500h7" stroke="#ff0000" stroke-width="1.8"/><rect x="0.5" y="12" width="15" height="9" fill="#000"/><path d="M1 18.500h3.500v-4.500h4.500v4.500h3.500v-4.500h2" stroke="#00ff00" stroke-width="1.7" fill="none"/><rect x="16.5" y="12.5" width="5.500" height="8" fill="#808080" stroke="#404040" stroke-width="0.800"/><path d="M15.700 9.500v12" stroke="#00e0e0" stroke-width="1.500"/></svg><svg style="position:absolute;left:2751.80px;top:51.05px;" width="10" height="5.5" viewBox="0 0 10 5.5"><polygon points="0,0 10,0 5.0,5.5" fill="#000"/></svg><div class="" style="left:2766.30px;top:37.20px;width:205.20px;height:33.40px;background:#c0c0c0;box-shadow:inset 1.35px 1.35px 0 #808080,inset -1.35px -1.35px 0 #fff,inset 2.7px 2.7px 0 #101010,inset -2.7px -2.7px 0 #c0c0c0;"></div><div class="" style="left:2948.70px;top:40.20px;width:21.40px;height:27.80px;background:#c0c0c0;box-shadow:inset 1.35px 1.35px 0 #fff,inset -1.35px -1.35px 0 #202020,inset -2.7px -2.7px 0 #808080;"></div><svg style="position:absolute;left:2954.65px;top:51.40px;" width="9.5" height="5.2" viewBox="0 0 9.5 5.2"><polygon points="0,0 9.5,0 4.75,5.2" fill="#a0a0a0"/></svg><svg style="position:absolute;left:2958.70px;top:51.00px;" width="8" height="6" viewBox="0 0 8 6"><path d="M1 5l4-3.500" stroke="#fff" stroke-width="1.300"/></svg><svg style="position:absolute;left:2977.00px;top:46.00px;" width="22" height="19" viewBox="0 0 22 19"><rect x="0" y="11.300" width="22" height="7.200" fill="#000"/><path d="M0.500 16.700h3v-3.800h4v3.800h4v-3.800h4v3.800h6" stroke="#c0c0c0" stroke-width="1.300" fill="none"/><circle cx="4" cy="4.500" r="2.800" fill="none" stroke="#000" stroke-width="1.100"/><path d="M4 1.500v6M1 4.500h6" stroke="#000" stroke-width="0.900"/><path d="M9 4.500h11v5M9 4.500l3.500-3M9 4.500l3.500 3" stroke="#000" stroke-width="1.300" fill="none"/></svg><svg style="position:absolute;left:3007.00px;top:44.00px;" width="23" height="21" viewBox="0 0 23 21"><g transform="translate(0,2)"><rect x="0" y="11.300" width="22" height="7.200" fill="#000"/><path d="M0.500 16.700h3v-3.800h4v3.800h4v-3.800h4v3.800h6" stroke="#c0c0c0" stroke-width="1.300" fill="none"/></g><circle cx="5.500" cy="6.500" r="4" fill="none" stroke="#000" stroke-width="1.100"/><path d="M5.500 2v9M1 6.500h9" stroke="#000" stroke-width="0.900"/><path d="M12.500 1l8 8M20.500 1l-8 8" stroke="#000" stroke-width="1.300"/></svg><svg style="position:absolute;left:3054.00px;top:43.50px;" width="19" height="19" viewBox="0 0 19 19"><rect x="0.700" y="0.700" width="13" height="13" fill="#fff" stroke="#000" stroke-width="1.300"/><rect x="0.500" y="0.500" width="13.500" height="3" fill="#0000c0"/><path d="M0 1h14" stroke="#000" stroke-width="1.200"/><path d="M10 8h5.500l3 3v4.500l-3 3h-5.500l-3-3v-4.500z" fill="#e02020"/></svg><svg style="position:absolute;left:3084.50px;top:43.00px;" width="23" height="21" viewBox="0 0 23 21"><path d="M4 8q3-7 10-5.500" stroke="#30a0f0" stroke-width="1.800" fill="none"/><path d="M13 0l4 3l-4.500 2.500z" fill="#30a0f0"/><path d="M18.500 13q-3 7-10 5.500" stroke="#30a0f0" stroke-width="1.800" fill="none"/><path d="M9.500 21l-4-3l4.500-2.500z" fill="#30a0f0"/><text x="11" y="14.500" font-size="10.500" text-anchor="middle" fill="#000" font-family="Liberation Sans,sans-serif" letter-spacing="-0.8">UVM</text></svg><div class="" style="left:2.00px;top:82.30px;width:958.00px;height:1.80px;background:#fff"></div><div class="" style="left:2.00px;top:84.10px;width:958.00px;height:1.30px;background:#808080"></div><div class="" style="left:2.00px;top:86.80px;width:958.00px;height:1.80px;background:#fff"></div><div class="" style="left:2.00px;top:88.60px;width:958.00px;height:1.30px;background:#808080"></div><div class="" style="left:964.30px;top:76.40px;width:17.00px;height:16.00px;background:#c0c0c0;box-shadow:inset 1.35px 1.35px 0 #fff,inset -1.35px -1.35px 0 #202020,inset -2.7px -2.7px 0 #808080;"></div><svg style="position:absolute;left:964.30px;top:76.40px;" width="17" height="16" viewBox="0 0 17 16"><path d="M5 4.500l7 7M12 4.500l-7 7" stroke="#000" stroke-width="2.300"/></svg><svg style="position:absolute;left:0;top:98.2px;overflow:visible" width="10" height="23.00"><path d="M0.50 23.00 L6.00 5.0 Q7.30 0.700 10.70 0.700 L81.50 0.700 Q85.10 0.700 86.90 5.0 L93.00 23.00" fill="#c0c0c0" stroke="#000" stroke-width="1.350"/></svg><div class="t" style="left:6.80px;top:98.50px;height:24px;line-height:24px;">Hier.1</div><svg style="position:absolute;left:0;top:98.2px;overflow:visible" width="10" height="23.00"><path d="M90.50 23.00 L99.10 5.0 Q100.40 0.700 103.80 0.700 L183.10 0.700 Q186.70 0.700 188.50 5.0 L193.90 23.00" fill="#c0c0c0" stroke="#000" stroke-width="1.350"/></svg><div class="t" style="left:96.60px;top:98.50px;height:24px;line-height:24px;">Stack.1</div><svg style="position:absolute;left:0;top:98.2px;overflow:visible" width="10" height="23.00"><path d="M296.30 23.00 L304.00 5.0 Q305.30 0.700 308.70 0.700 L402.60 0.700 Q406.20 0.700 408.00 5.0 L413.30 23.00" fill="#c0c0c0" stroke="#000" stroke-width="1.350"/></svg><div class="t" style="left:301.20px;top:98.50px;height:24px;line-height:24px;">Object.1</div><svg style="position:absolute;left:0;top:98.2px;overflow:visible" width="10" height="23.00"><path d="M193.00 23.00 L201.30 5.0 Q202.60 0.700 206.00 0.700 L285.60 0.700 Q289.20 0.700 291.00 5.0 L298.00 23.00" fill="#fff" stroke="#000" stroke-width="1.350"/></svg><div class="t" style="left:198.40px;top:97.20px;height:24px;line-height:24px;">Class.1</div><div class="" style="left:0.00px;top:121.60px;width:36.00px;height:33.60px;background:#c0c0c0;box-shadow:inset 1.35px 1.35px 0 #fff,inset -1.35px -1.35px 0 #202020,inset -2.7px -2.7px 0 #808080;"></div><svg style="position:absolute;left:3.40px;top:130.80px;" width="18" height="18" viewBox="0 0 18 18"><rect x="1" y="1" width="16" height="16" fill="#fff" stroke="#0000ff" stroke-width="2"/><path d="M5 5v9h8M5 9.500h6M5 5h7" stroke="#000" stroke-width="1.600" fill="none"/></svg><svg style="position:absolute;left:24.25px;top:137.40px;" width="7.5" height="4.2" viewBox="0 0 7.5 4.2"><polygon points="0,0 7.5,0 3.75,4.2" fill="#000"/></svg><div class="" style="left:36.70px;top:121.60px;width:68.50px;height:33.60px;background:#c0c0c0;box-shadow:inset 1.35px 1.35px 0 #fff,inset -1.35px -1.35px 0 #202020,inset -2.7px -2.7px 0 #808080;"></div><div class="t" style="left:52.80px;top:125.50px;height:27px;line-height:27px;">Sim</div><div class="" style="left:106.00px;top:121.60px;width:16.50px;height:33.60px;background:#c0c0c0;box-shadow:inset 1.35px 1.35px 0 #fff,inset -1.35px -1.35px 0 #202020,inset -2.7px -2.7px 0 #808080;"></div><svg style="position:absolute;left:110.05px;top:137.10px;" width="8.5" height="4.8" viewBox="0 0 8.5 4.8"><polygon points="0,0 8.5,0 4.25,4.8" fill="#000"/></svg><div class="" style="left:122.80px;top:121.40px;width:801.80px;height:34.90px;background:#fff;box-shadow:inset 1.35px 1.35px 0 #808080,inset -1.35px -1.35px 0 #fff,inset 2.7px 2.7px 0 #101010,inset -2.7px -2.7px 0 #c0c0c0;"></div><div class="t" style="left:128.80px;top:125.50px;height:27px;line-height:27px;">*dis*</div><div class="" style="left:902.90px;top:124.00px;width:19.40px;height:29.70px;background:#c0c0c0;box-shadow:inset 1.35px 1.35px 0 #fff,inset -1.35px -1.35px 0 #202020,inset -2.7px -2.7px 0 #808080;"></div><svg style="position:absolute;left:907.50px;top:136.45px;" width="10.2" height="5.8" viewBox="0 0 10.2 5.8"><polygon points="0,0 10.2,0 5.1,5.8" fill="#000"/></svg><div class="" style="left:926.10px;top:121.40px;width:56.50px;height:34.90px;background:#fff;box-shadow:inset 1.35px 1.35px 0 #808080,inset -1.35px -1.35px 0 #fff,inset 2.7px 2.7px 0 #101010,inset -2.7px -2.7px 0 #c0c0c0;"></div><svg style="position:absolute;left:931.50px;top:130.30px;" width="26" height="17" viewBox="0 0 26 17"><path d="M1 4.500h8M1 12.500h8" stroke="#1a9a1a" stroke-width="1.300"/><path d="M6 1.500l3.300 3l-3.300 3M6 9.500l3.300 3l-3.300 3" stroke="#1a9a1a" stroke-width="1.300" fill="none"/><path d="M12 1v15.500" stroke="#333" stroke-width="1.400"/><path d="M14.500 4.500h8M14.500 12.500h8" stroke="#1a9a1a" stroke-width="1.300"/><path d="M19.500 1.500l3.300 3l-3.300 3M19.500 9.500l3.300 3l-3.300 3" stroke="#1a9a1a" stroke-width="1.300" fill="none"/></svg><div class="" style="left:960.60px;top:124.00px;width:19.60px;height:29.70px;background:#c0c0c0;box-shadow:inset 1.35px 1.35px 0 #fff,inset -1.35px -1.35px 0 #202020,inset -2.7px -2.7px 0 #808080;"></div><svg style="position:absolute;left:965.30px;top:136.45px;" width="10.2" height="5.8" viewBox="0 0 10.2 5.8"><polygon points="0,0 10.2,0 5.1,5.8" fill="#000"/></svg><div class="" style="left:0.00px;top:157.20px;width:983.00px;height:1099.00px;background:#fff;box-shadow:inset 1.35px 1.35px 0 #808080,inset -1.35px -1.35px 0 #fff,inset 2.7px 2.7px 0 #101010,inset -2.7px -2.7px 0 #c0c0c0;"></div><div class="" style="left:2.70px;top:159.80px;width:746.00px;height:33.50px;background:#c0c0c0;box-shadow:inset 1.35px 1.35px 0 #fff,inset -1.35px -1.35px 0 #202020,inset -2.7px -2.7px 0 #808080;"></div><div class="t" style="left:32.00px;top:163.60px;height:27px;line-height:27px;">Name</div><svg style="position:absolute;left:98.20px;top:164.80px;" width="19" height="23" viewBox="0 0 19 23"><path d="M0.700 0.700h17" stroke="#808080" stroke-width="1.300"/><path d="M0.700 0.700l8 20.500" stroke="#808080" stroke-width="1.300"/><path d="M17.500 0.700l-8.500 20.500" stroke="#fff" stroke-width="1.300"/></svg><div class="" style="left:748.70px;top:159.80px;width:232.00px;height:33.50px;background:#c0c0c0;box-shadow:inset 1.35px 1.35px 0 #fff,inset -1.35px -1.35px 0 #202020,inset -2.7px -2.7px 0 #808080;"></div><div class="t" style="left:753.60px;top:163.60px;height:27px;line-height:27px;">Module</div><svg style="position:absolute;left:8.20px;top:168.30px;" width="20" height="21" viewBox="0 0 20 21"><path d="M0.500 3.500h7M4.500 0.500l3 3l-3 3" stroke="#00e0e0" stroke-width="1.400" fill="none"/><path d="M0.500 10.500h7M4.500 7.500l3 3l-3 3" stroke="#00e000" stroke-width="1.400" fill="none"/><path d="M0.500 17.500h7M4.500 14.500l3 3l-3 3" stroke="#0000ff" stroke-width="1.400" fill="none"/><path d="M9 1v20" stroke="#000" stroke-width="1.500"/><path d="M10.500 10.500h8M15.500 7.500l3 3l-3 3" stroke="#00e000" stroke-width="1.400" fill="none"/></svg><div class="" style="left:82.95px;top:491.76px;width:665.75px;height:29.68px;background:#f5f5dc;"></div><div class="" style="left:96.40px;top:521.44px;width:652.30px;height:29.68px;background:#f5f5dc;"></div><div class="" style="left:96.40px;top:699.52px;width:652.30px;height:29.68px;background:#f5f5dc;"></div><div class="" style="left:109.55px;top:729.20px;width:870.75px;height:29.68px;background:#000080;"></div><div class="" style="left:96.40px;top:758.88px;width:652.30px;height:29.68px;background:#f5f5dc;"></div><div class="" style="left:109.85px;top:788.56px;width:638.85px;height:29.68px;background:#f5f5dc;"></div><div class="" style="left:8.82px;top:194.00px;width:0.00px;height:129.52px;border-left:1.350px dotted #606060;"></div><div class="" style="left:22.27px;top:219.30px;width:0.00px;height:74.54px;border-left:1.350px dotted #606060;"></div><div class="" style="left:22.27px;top:338.02px;width:0.00px;height:15.18px;border-left:1.350px dotted #606060;"></div><div class="" style="left:35.73px;top:367.70px;width:0.00px;height:193.26px;border-left:1.350px dotted #606060;"></div><div class="" style="left:49.17px;top:397.38px;width:0.00px;height:44.86px;border-left:1.350px dotted #606060;"></div><div class="" style="left:62.62px;top:456.74px;width:0.00px;height:15.18px;border-left:1.350px dotted #606060;"></div><div class="" style="left:76.08px;top:486.42px;width:0.00px;height:15.18px;border-left:1.350px dotted #606060;"></div><div class="" style="left:89.52px;top:516.10px;width:0.00px;height:15.18px;border-left:1.350px dotted #606060;"></div><div class="" style="left:49.17px;top:575.46px;width:0.00px;height:15.18px;border-left:1.350px dotted #606060;"></div><div class="" style="left:62.62px;top:605.14px;width:0.00px;height:15.18px;border-left:1.350px dotted #606060;"></div><div class="" style="left:76.08px;top:634.82px;width:0.00px;height:44.86px;border-left:1.350px dotted #606060;"></div><div class="" style="left:89.52px;top:694.18px;width:0.00px;height:74.54px;border-left:1.350px dotted #606060;"></div><div class="" style="left:102.97px;top:723.86px;width:0.00px;height:15.18px;border-left:1.350px dotted #606060;"></div><div class="" style="left:102.97px;top:783.22px;width:0.00px;height:15.18px;border-left:1.350px dotted #606060;"></div><svg style="position:absolute;left:4.20px;top:204.50px;" width="10.6" height="10.6" viewBox="0 0 10.6 10.6"><rect x="0.600" y="0.600" width="9.400" height="9.400" fill="#fff" stroke="#808080" stroke-width="1.200"/><path d="M2.600 5.300h5.400" stroke="#000" stroke-width="1.300"/></svg><svg style="position:absolute;left:20.60px;top:200.60px;" width="18.4" height="18.4" viewBox="0 0 18.4 18.4"><circle cx="9.200" cy="9.200" r="8.500" fill="#2f9e2f" stroke="#1f7a1f" stroke-width="1.200"/><text x="9.200" y="13.800" font-size="13" font-weight="bold" text-anchor="middle" fill="#fff" font-family="Liberation Sans,sans-serif">C</text></svg><div class="t" style="left:43.40px;top:195.80px;height:27px;line-height:27px;">uvm_object_wrapper</div><div class="t" style="left:753.40px;top:195.80px;height:27px;line-height:27px;">uvm_pkg</div><svg style="position:absolute;left:17.65px;top:234.18px;" width="10.6" height="10.6" viewBox="0 0 10.6 10.6"><rect x="0.600" y="0.600" width="9.400" height="9.400" fill="#fff" stroke="#808080" stroke-width="1.200"/><path d="M2.600 5.300h5.400" stroke="#000" stroke-width="1.300"/><path d="M5.300 2.600v5.400" stroke="#000" stroke-width="1.300"/></svg><svg style="position:absolute;left:34.05px;top:230.28px;" width="18.4" height="18.4" viewBox="0 0 18.4 18.4"><circle cx="9.200" cy="9.200" r="8.500" fill="#2f9e2f" stroke="#1f7a1f" stroke-width="1.200"/><text x="9.200" y="13.800" font-size="13" font-weight="bold" text-anchor="middle" fill="#fff" font-family="Liberation Sans,sans-serif">C</text></svg><div class="t" style="left:56.85px;top:225.48px;height:27px;line-height:27px;">uvm_component_registry#(apb_watchdog_pkg::apb_watchdo...</div><div class="t" style="left:753.40px;top:225.48px;height:27px;line-height:27px;">uvm_pkg</div><svg style="position:absolute;left:17.65px;top:263.86px;" width="10.6" height="10.6" viewBox="0 0 10.6 10.6"><rect x="0.600" y="0.600" width="9.400" height="9.400" fill="#fff" stroke="#808080" stroke-width="1.200"/><path d="M2.600 5.300h5.400" stroke="#000" stroke-width="1.300"/><path d="M5.300 2.600v5.400" stroke="#000" stroke-width="1.300"/></svg><svg style="position:absolute;left:34.05px;top:259.96px;" width="18.4" height="18.4" viewBox="0 0 18.4 18.4"><circle cx="9.200" cy="9.200" r="8.500" fill="#2f9e2f" stroke="#1f7a1f" stroke-width="1.200"/><text x="9.200" y="13.800" font-size="13" font-weight="bold" text-anchor="middle" fill="#fff" font-family="Liberation Sans,sans-serif">C</text></svg><div class="t" style="left:56.85px;top:255.16px;height:27px;line-height:27px;">uvm_object_registry#(apb_watchdog_pkg::apb_watchdog_d...</div><div class="t" style="left:753.40px;top:255.16px;height:27px;line-height:27px;">uvm_pkg</div><svg style="position:absolute;left:17.65px;top:293.54px;" width="10.6" height="10.6" viewBox="0 0 10.6 10.6"><rect x="0.600" y="0.600" width="9.400" height="9.400" fill="#fff" stroke="#808080" stroke-width="1.200"/><path d="M2.600 5.300h5.400" stroke="#000" stroke-width="1.300"/><path d="M5.300 2.600v5.400" stroke="#000" stroke-width="1.300"/></svg><svg style="position:absolute;left:34.05px;top:289.64px;" width="18.4" height="18.4" viewBox="0 0 18.4 18.4"><circle cx="9.200" cy="9.200" r="8.500" fill="#2f9e2f" stroke="#1f7a1f" stroke-width="1.200"/><text x="9.200" y="13.800" font-size="13" font-weight="bold" text-anchor="middle" fill="#fff" font-family="Liberation Sans,sans-serif">C</text></svg><div class="t" style="left:56.85px;top:284.84px;height:27px;line-height:27px;">uvm_object_registry#(apb_watchdog_pkg::apb_watchdog_r...</div><div class="t" style="left:753.40px;top:284.84px;height:27px;line-height:27px;">uvm_pkg</div><svg style="position:absolute;left:4.20px;top:323.22px;" width="10.6" height="10.6" viewBox="0 0 10.6 10.6"><rect x="0.600" y="0.600" width="9.400" height="9.400" fill="#fff" stroke="#808080" stroke-width="1.200"/><path d="M2.600 5.300h5.400" stroke="#000" stroke-width="1.300"/></svg><svg style="position:absolute;left:20.60px;top:319.32px;" width="18.4" height="18.4" viewBox="0 0 18.4 18.4"><circle cx="9.200" cy="9.200" r="8.500" fill="#2f9e2f" stroke="#1f7a1f" stroke-width="1.200"/><text x="9.200" y="13.800" font-size="13" font-weight="bold" text-anchor="middle" fill="#fff" font-family="Liberation Sans,sans-serif">C</text></svg><div class="t" style="left:43.40px;top:314.52px;height:27px;line-height:27px;">uvm_void</div><div class="t" style="left:753.40px;top:314.52px;height:27px;line-height:27px;">uvm_pkg</div><svg style="position:absolute;left:17.65px;top:352.90px;" width="10.6" height="10.6" viewBox="0 0 10.6 10.6"><rect x="0.600" y="0.600" width="9.400" height="9.400" fill="#fff" stroke="#808080" stroke-width="1.200"/><path d="M2.600 5.300h5.400" stroke="#000" stroke-width="1.300"/></svg><svg style="position:absolute;left:34.05px;top:349.00px;" width="18.4" height="18.4" viewBox="0 0 18.4 18.4"><circle cx="9.200" cy="9.200" r="8.500" fill="#2f9e2f" stroke="#1f7a1f" stroke-width="1.200"/><text x="9.200" y="13.800" font-size="13" font-weight="bold" text-anchor="middle" fill="#fff" font-family="Liberation Sans,sans-serif">C</text></svg><div class="t" style="left:56.85px;top:344.20px;height:27px;line-height:27px;">uvm_object</div><div class="t" style="left:753.40px;top:344.20px;height:27px;line-height:27px;">uvm_pkg</div><svg style="position:absolute;left:31.10px;top:382.58px;" width="10.6" height="10.6" viewBox="0 0 10.6 10.6"><rect x="0.600" y="0.600" width="9.400" height="9.400" fill="#fff" stroke="#808080" stroke-width="1.200"/><path d="M2.600 5.300h5.400" stroke="#000" stroke-width="1.300"/></svg><svg style="position:absolute;left:47.50px;top:378.68px;" width="18.4" height="18.4" viewBox="0 0 18.4 18.4"><circle cx="9.200" cy="9.200" r="8.500" fill="#2f9e2f" stroke="#1f7a1f" stroke-width="1.200"/><text x="9.200" y="13.800" font-size="13" font-weight="bold" text-anchor="middle" fill="#fff" font-family="Liberation Sans,sans-serif">C</text></svg><div class="t" style="left:70.30px;top:373.88px;height:27px;line-height:27px;">uvm_report_object</div><div class="t" style="left:753.40px;top:373.88px;height:27px;line-height:27px;">uvm_pkg</div><svg style="position:absolute;left:44.55px;top:412.26px;" width="10.6" height="10.6" viewBox="0 0 10.6 10.6"><rect x="0.600" y="0.600" width="9.400" height="9.400" fill="#fff" stroke="#808080" stroke-width="1.200"/><path d="M2.600 5.300h5.400" stroke="#000" stroke-width="1.300"/><path d="M5.300 2.600v5.400" stroke="#000" stroke-width="1.300"/></svg><svg style="position:absolute;left:58.95px;top:407.06px;" width="22" height="22" viewBox="0 0 22 22"><path d="M0.700 21v-17.500l2.500-2.800h6l2.500 2.800h9v17.500z" fill="#e8e060" stroke="#606020" stroke-width="1.200"/><path d="M1 5h19" stroke="#fff8a0" stroke-width="1"/><rect x="14" y="13" width="8" height="9" fill="#3c8cf0"/><text x="18" y="21" font-size="9.500" font-weight="bold" text-anchor="middle" fill="#000060" font-family="Liberation Sans,sans-serif">o</text></svg><div class="t" style="left:83.75px;top:403.56px;height:27px;line-height:27px;">&lt;instances: 20&gt;</div><svg style="position:absolute;left:44.55px;top:441.94px;" width="10.6" height="10.6" viewBox="0 0 10.6 10.6"><rect x="0.600" y="0.600" width="9.400" height="9.400" fill="#fff" stroke="#808080" stroke-width="1.200"/><path d="M2.600 5.300h5.400" stroke="#000" stroke-width="1.300"/></svg><svg style="position:absolute;left:60.95px;top:438.04px;" width="18.4" height="18.4" viewBox="0 0 18.4 18.4"><circle cx="9.200" cy="9.200" r="8.500" fill="#2f9e2f" stroke="#1f7a1f" stroke-width="1.200"/><text x="9.200" y="13.800" font-size="13" font-weight="bold" text-anchor="middle" fill="#fff" font-family="Liberation Sans,sans-serif">C</text></svg><div class="t" style="left:83.75px;top:433.24px;height:27px;line-height:27px;">uvm_component</div><div class="t" style="left:753.40px;top:433.24px;height:27px;line-height:27px;">uvm_pkg</div><svg style="position:absolute;left:58.00px;top:471.62px;" width="10.6" height="10.6" viewBox="0 0 10.6 10.6"><rect x="0.600" y="0.600" width="9.400" height="9.400" fill="#fff" stroke="#808080" stroke-width="1.200"/><path d="M2.600 5.300h5.400" stroke="#000" stroke-width="1.300"/></svg><svg style="position:absolute;left:74.40px;top:467.72px;" width="18.4" height="18.4" viewBox="0 0 18.4 18.4"><circle cx="9.200" cy="9.200" r="8.500" fill="#2f9e2f" stroke="#1f7a1f" stroke-width="1.200"/><text x="9.200" y="13.800" font-size="13" font-weight="bold" text-anchor="middle" fill="#fff" font-family="Liberation Sans,sans-serif">C</text></svg><div class="t" style="left:97.20px;top:462.92px;height:27px;line-height:27px;">uvm_test</div><div class="t" style="left:753.40px;top:462.92px;height:27px;line-height:27px;">uvm_pkg</div><svg style="position:absolute;left:71.45px;top:501.30px;" width="10.6" height="10.6" viewBox="0 0 10.6 10.6"><rect x="0.600" y="0.600" width="9.400" height="9.400" fill="#fff" stroke="#808080" stroke-width="1.200"/><path d="M2.600 5.300h5.400" stroke="#000" stroke-width="1.300"/></svg><svg style="position:absolute;left:87.85px;top:497.40px;" width="18.4" height="18.4" viewBox="0 0 18.4 18.4"><circle cx="9.200" cy="9.200" r="8.500" fill="#2f9e2f" stroke="#1f7a1f" stroke-width="1.200"/><text x="9.200" y="13.800" font-size="13" font-weight="bold" text-anchor="middle" fill="#fff" font-family="Liberation Sans,sans-serif">C</text></svg><div class="t" style="left:110.65px;top:492.60px;height:27px;line-height:27px;">apb_watchdog_base_test</div><div class="t" style="left:753.40px;top:492.60px;height:27px;line-height:27px;">apb_watchdog_pkg</div><svg style="position:absolute;left:84.90px;top:530.98px;" width="10.6" height="10.6" viewBox="0 0 10.6 10.6"><rect x="0.600" y="0.600" width="9.400" height="9.400" fill="#fff" stroke="#808080" stroke-width="1.200"/><path d="M2.600 5.300h5.400" stroke="#000" stroke-width="1.300"/><path d="M5.300 2.600v5.400" stroke="#000" stroke-width="1.300"/></svg><svg style="position:absolute;left:101.30px;top:527.08px;" width="18.4" height="18.4" viewBox="0 0 18.4 18.4"><circle cx="9.200" cy="9.200" r="8.500" fill="#2f9e2f" stroke="#1f7a1f" stroke-width="1.200"/><text x="9.200" y="13.800" font-size="13" font-weight="bold" text-anchor="middle" fill="#fff" font-family="Liberation Sans,sans-serif">C</text></svg><div class="t" style="left:124.10px;top:522.28px;height:27px;line-height:27px;">apb_watchdog_disable_intr_test</div><div class="t" style="left:753.40px;top:522.28px;height:27px;line-height:27px;">apb_watchdog_pkg</div><svg style="position:absolute;left:31.10px;top:560.66px;" width="10.6" height="10.6" viewBox="0 0 10.6 10.6"><rect x="0.600" y="0.600" width="9.400" height="9.400" fill="#fff" stroke="#808080" stroke-width="1.200"/><path d="M2.600 5.300h5.400" stroke="#000" stroke-width="1.300"/></svg><svg style="position:absolute;left:47.50px;top:556.76px;" width="18.4" height="18.4" viewBox="0 0 18.4 18.4"><circle cx="9.200" cy="9.200" r="8.500" fill="#2f9e2f" stroke="#1f7a1f" stroke-width="1.200"/><text x="9.200" y="13.800" font-size="13" font-weight="bold" text-anchor="middle" fill="#fff" font-family="Liberation Sans,sans-serif">C</text></svg><div class="t" style="left:70.30px;top:551.96px;height:27px;line-height:27px;">uvm_transaction</div><div class="t" style="left:753.40px;top:551.96px;height:27px;line-height:27px;">uvm_pkg</div><svg style="position:absolute;left:44.55px;top:590.34px;" width="10.6" height="10.6" viewBox="0 0 10.6 10.6"><rect x="0.600" y="0.600" width="9.400" height="9.400" fill="#fff" stroke="#808080" stroke-width="1.200"/><path d="M2.600 5.300h5.400" stroke="#000" stroke-width="1.300"/></svg><svg style="position:absolute;left:60.95px;top:586.44px;" width="18.4" height="18.4" viewBox="0 0 18.4 18.4"><circle cx="9.200" cy="9.200" r="8.500" fill="#2f9e2f" stroke="#1f7a1f" stroke-width="1.200"/><text x="9.200" y="13.800" font-size="13" font-weight="bold" text-anchor="middle" fill="#fff" font-family="Liberation Sans,sans-serif">C</text></svg><div class="t" style="left:83.75px;top:581.64px;height:27px;line-height:27px;">uvm_sequence_item</div><div class="t" style="left:753.40px;top:581.64px;height:27px;line-height:27px;">uvm_pkg</div><svg style="position:absolute;left:58.00px;top:620.02px;" width="10.6" height="10.6" viewBox="0 0 10.6 10.6"><rect x="0.600" y="0.600" width="9.400" height="9.400" fill="#fff" stroke="#808080" stroke-width="1.200"/><path d="M2.600 5.300h5.400" stroke="#000" stroke-width="1.300"/></svg><svg style="position:absolute;left:74.40px;top:616.12px;" width="18.4" height="18.4" viewBox="0 0 18.4 18.4"><circle cx="9.200" cy="9.200" r="8.500" fill="#2f9e2f" stroke="#1f7a1f" stroke-width="1.200"/><text x="9.200" y="13.800" font-size="13" font-weight="bold" text-anchor="middle" fill="#fff" font-family="Liberation Sans,sans-serif">C</text></svg><div class="t" style="left:97.20px;top:611.32px;height:27px;line-height:27px;">uvm_sequence_base</div><div class="t" style="left:753.40px;top:611.32px;height:27px;line-height:27px;">uvm_pkg</div><svg style="position:absolute;left:71.45px;top:649.70px;" width="10.6" height="10.6" viewBox="0 0 10.6 10.6"><rect x="0.600" y="0.600" width="9.400" height="9.400" fill="#fff" stroke="#808080" stroke-width="1.200"/><path d="M2.600 5.300h5.400" stroke="#000" stroke-width="1.300"/><path d="M5.300 2.600v5.400" stroke="#000" stroke-width="1.300"/></svg><svg style="position:absolute;left:85.85px;top:644.50px;" width="22" height="22" viewBox="0 0 22 22"><path d="M0.700 21v-17.500l2.500-2.800h6l2.500 2.800h9v17.500z" fill="#e8e060" stroke="#606020" stroke-width="1.200"/><path d="M1 5h19" stroke="#fff8a0" stroke-width="1"/><rect x="14" y="13" width="8" height="9" fill="#3c8cf0"/><text x="18" y="21" font-size="9.500" font-weight="bold" text-anchor="middle" fill="#000060" font-family="Liberation Sans,sans-serif">o</text></svg><div class="t" style="left:110.65px;top:641.00px;height:27px;line-height:27px;">&lt;instances: 5&gt;</div><svg style="position:absolute;left:71.45px;top:679.38px;" width="10.6" height="10.6" viewBox="0 0 10.6 10.6"><rect x="0.600" y="0.600" width="9.400" height="9.400" fill="#fff" stroke="#808080" stroke-width="1.200"/><path d="M2.600 5.300h5.400" stroke="#000" stroke-width="1.300"/></svg><svg style="position:absolute;left:87.85px;top:675.48px;" width="18.4" height="18.4" viewBox="0 0 18.4 18.4"><circle cx="9.200" cy="9.200" r="8.500" fill="#2f9e2f" stroke="#1f7a1f" stroke-width="1.200"/><text x="9.200" y="13.800" font-size="13" font-weight="bold" text-anchor="middle" fill="#fff" font-family="Liberation Sans,sans-serif">C</text></svg><div class="t" style="left:110.65px;top:670.68px;height:27px;line-height:27px;">uvm_sequence#(uvm_pkg::uvm_sequence_item,uvm_pkg:...</div><div class="t" style="left:753.40px;top:670.68px;height:27px;line-height:27px;">uvm_pkg</div><svg style="position:absolute;left:84.90px;top:709.06px;" width="10.6" height="10.6" viewBox="0 0 10.6 10.6"><rect x="0.600" y="0.600" width="9.400" height="9.400" fill="#fff" stroke="#808080" stroke-width="1.200"/><path d="M2.600 5.300h5.400" stroke="#000" stroke-width="1.300"/></svg><svg style="position:absolute;left:101.30px;top:705.16px;" width="18.4" height="18.4" viewBox="0 0 18.4 18.4"><circle cx="9.200" cy="9.200" r="8.500" fill="#2f9e2f" stroke="#1f7a1f" stroke-width="1.200"/><text x="9.200" y="13.800" font-size="13" font-weight="bold" text-anchor="middle" fill="#fff" font-family="Liberation Sans,sans-serif">C</text></svg><div class="t" style="left:124.10px;top:700.36px;height:27px;line-height:27px;">apb_watchdog_base_virt_seq</div><div class="t" style="left:753.40px;top:700.36px;height:27px;line-height:27px;">apb_watchdog_pkg</div><svg style="position:absolute;left:98.35px;top:738.74px;" width="10.6" height="10.6" viewBox="0 0 10.6 10.6"><rect x="0.600" y="0.600" width="9.400" height="9.400" fill="#fff" stroke="#808080" stroke-width="1.200"/><path d="M2.600 5.300h5.400" stroke="#000" stroke-width="1.300"/><path d="M5.300 2.600v5.400" stroke="#000" stroke-width="1.300"/></svg><svg style="position:absolute;left:114.75px;top:734.84px;" width="18.4" height="18.4" viewBox="0 0 18.4 18.4"><circle cx="9.200" cy="9.200" r="8.500" fill="#2f9e2f" stroke="#1f7a1f" stroke-width="1.200"/><text x="9.200" y="13.800" font-size="13" font-weight="bold" text-anchor="middle" fill="#fff" font-family="Liberation Sans,sans-serif">C</text></svg><div class="t" style="left:137.55px;top:730.04px;height:27px;line-height:27px;color:#fff;">apb_watchdog_disable_intr_virt_seq</div><div class="t" style="left:753.40px;top:730.04px;height:27px;line-height:27px;color:#fff;">apb_watchdog_pkg</div><svg style="position:absolute;left:84.90px;top:768.42px;" width="10.6" height="10.6" viewBox="0 0 10.6 10.6"><rect x="0.600" y="0.600" width="9.400" height="9.400" fill="#fff" stroke="#808080" stroke-width="1.200"/><path d="M2.600 5.300h5.400" stroke="#000" stroke-width="1.300"/></svg><svg style="position:absolute;left:101.30px;top:764.52px;" width="18.4" height="18.4" viewBox="0 0 18.4 18.4"><circle cx="9.200" cy="9.200" r="8.500" fill="#2f9e2f" stroke="#1f7a1f" stroke-width="1.200"/><text x="9.200" y="13.800" font-size="13" font-weight="bold" text-anchor="middle" fill="#fff" font-family="Liberation Sans,sans-serif">C</text></svg><div class="t" style="left:124.10px;top:759.72px;height:27px;line-height:27px;">apb_watchdog_element_base_seq</div><div class="t" style="left:753.40px;top:759.72px;height:27px;line-height:27px;">apb_watchdog_pkg</div><svg style="position:absolute;left:98.35px;top:798.10px;" width="10.6" height="10.6" viewBox="0 0 10.6 10.6"><rect x="0.600" y="0.600" width="9.400" height="9.400" fill="#fff" stroke="#808080" stroke-width="1.200"/><path d="M2.600 5.300h5.400" stroke="#000" stroke-width="1.300"/><path d="M5.300 2.600v5.400" stroke="#000" stroke-width="1.300"/></svg><svg style="position:absolute;left:114.75px;top:794.20px;" width="18.4" height="18.4" viewBox="0 0 18.4 18.4"><circle cx="9.200" cy="9.200" r="8.500" fill="#2f9e2f" stroke="#1f7a1f" stroke-width="1.200"/><text x="9.200" y="13.800" font-size="13" font-weight="bold" text-anchor="middle" fill="#fff" font-family="Liberation Sans,sans-serif">C</text></svg><div class="t" style="left:137.55px;top:789.40px;height:27px;line-height:27px;">apb_watchdog_reg_disable_intr</div><div class="t" style="left:753.40px;top:789.40px;height:27px;line-height:27px;">apb_watchdog_pkg</div><div class="" style="left:994.00px;top:82.30px;width:760.00px;height:1.80px;background:#fff"></div><div class="" style="left:994.00px;top:84.10px;width:760.00px;height:1.30px;background:#808080"></div><div class="" style="left:994.00px;top:86.80px;width:760.00px;height:1.80px;background:#fff"></div><div class="" style="left:994.00px;top:88.60px;width:760.00px;height:1.30px;background:#808080"></div><div class="" style="left:1759.50px;top:76.40px;width:16.50px;height:16.00px;background:#c0c0c0;box-shadow:inset 1.35px 1.35px 0 #fff,inset -1.35px -1.35px 0 #202020,inset -2.7px -2.7px 0 #808080;"></div><svg style="position:absolute;left:1759.50px;top:76.40px;" width="16.5" height="16" viewBox="0 0 16.5 16"><path d="M5 4.500l7 7M12 4.500l-7 7" stroke="#000" stroke-width="2.300"/></svg><svg style="position:absolute;left:0;top:98.2px;overflow:visible" width="10" height="23.00"><path d="M992.50 23.00 L999.60 5.0 Q1000.90 0.700 1004.30 0.700 L1072.60 0.700 Q1076.20 0.700 1078.00 5.0 L1085.00 23.00" fill="#c0c0c0" stroke="#000" stroke-width="1.350"/></svg><div class="t" style="left:999.20px;top:98.50px;height:24px;line-height:24px;">Data.1</div><svg style="position:absolute;left:0;top:98.2px;overflow:visible" width="10" height="23.00"><path d="M1082.50 23.00 L1090.20 5.0 Q1091.50 0.700 1094.90 0.700 L1175.90 0.700 Q1179.50 0.700 1181.30 5.0 L1185.80 23.00" fill="#c0c0c0" stroke="#000" stroke-width="1.350"/></svg><div class="t" style="left:1088.30px;top:98.50px;height:24px;line-height:24px;">Local.1</div><svg style="position:absolute;left:0;top:98.2px;overflow:visible" width="10" height="23.00"><path d="M1185.00 23.00 L1194.30 5.0 Q1195.60 0.700 1199.00 0.700 L1289.50 0.700 Q1293.10 0.700 1294.90 5.0 L1302.80 23.00" fill="#fff" stroke="#000" stroke-width="1.350"/></svg><div class="t" style="left:1190.80px;top:97.20px;height:24px;line-height:24px;">Member.1</div><div class="" style="left:992.50px;top:121.40px;width:727.20px;height:34.90px;background:#fff;box-shadow:inset 1.35px 1.35px 0 #808080,inset -1.35px -1.35px 0 #fff,inset 2.7px 2.7px 0 #101010,inset -2.7px -2.7px 0 #c0c0c0;"></div><div class="t" style="left:998.60px;top:126.50px;height:27px;line-height:27px;">*</div><div class="" style="left:1698.00px;top:124.00px;width:19.60px;height:29.70px;background:#c0c0c0;box-shadow:inset 1.35px 1.35px 0 #fff,inset -1.35px -1.35px 0 #202020,inset -2.7px -2.7px 0 #808080;"></div><svg style="position:absolute;left:1702.70px;top:136.45px;" width="10.2" height="5.8" viewBox="0 0 10.2 5.8"><polygon points="0,0 10.2,0 5.1,5.8" fill="#000"/></svg><div class="" style="left:1721.20px;top:121.40px;width:56.50px;height:34.90px;background:#fff;box-shadow:inset 1.35px 1.35px 0 #808080,inset -1.35px -1.35px 0 #fff,inset 2.7px 2.7px 0 #101010,inset -2.7px -2.7px 0 #c0c0c0;"></div><svg style="position:absolute;left:1726.60px;top:130.30px;" width="26" height="17" viewBox="0 0 26 17"><path d="M1 4.500h8M1 12.500h8" stroke="#1a9a1a" stroke-width="1.300"/><path d="M6 1.500l3.300 3l-3.300 3M6 9.500l3.300 3l-3.300 3" stroke="#1a9a1a" stroke-width="1.300" fill="none"/><path d="M12 1v15.500" stroke="#333" stroke-width="1.400"/><path d="M14.500 8.500h9" stroke="#1a9a1a" stroke-width="1.300"/><path d="M20 5.500l3.500 3l-3.500 3" stroke="#1a9a1a" stroke-width="1.300" fill="none"/></svg><div class="" style="left:1755.70px;top:124.00px;width:19.90px;height:29.70px;background:#c0c0c0;box-shadow:inset 1.35px 1.35px 0 #fff,inset -1.35px -1.35px 0 #202020,inset -2.7px -2.7px 0 #808080;"></div><svg style="position:absolute;left:1760.55px;top:136.45px;" width="10.2" height="5.8" viewBox="0 0 10.2 5.8"><polygon points="0,0 10.2,0 5.1,5.8" fill="#000"/></svg><div class="" style="left:992.00px;top:157.20px;width:785.00px;height:1099.00px;background:#fff;box-shadow:inset 1.35px 1.35px 0 #808080,inset -1.35px -1.35px 0 #fff,inset 2.7px 2.7px 0 #101010,inset -2.7px -2.7px 0 #c0c0c0;"></div><div class="" style="left:994.70px;top:159.80px;width:305.30px;height:33.50px;background:#c0c0c0;box-shadow:inset 1.35px 1.35px 0 #fff,inset -1.35px -1.35px 0 #202020,inset -2.7px -2.7px 0 #808080;"></div><div class="t" style="left:1005.10px;top:163.60px;height:27px;line-height:27px;">Name</div><svg style="position:absolute;left:1071.30px;top:164.80px;" width="19" height="23" viewBox="0 0 19 23"><path d="M0.700 0.700h17" stroke="#808080" stroke-width="1.300"/><path d="M0.700 0.700l8 20.500" stroke="#808080" stroke-width="1.300"/><path d="M17.500 0.700l-8.500 20.500" stroke="#fff" stroke-width="1.300"/></svg><div class="" style="left:1300.00px;top:159.80px;width:251.60px;height:33.50px;background:#c0c0c0;box-shadow:inset 1.35px 1.35px 0 #fff,inset -1.35px -1.35px 0 #202020,inset -2.7px -2.7px 0 #808080;"></div><div class="t" style="left:1306.80px;top:163.60px;height:27px;line-height:27px;">Type</div><div class="" style="left:1551.60px;top:159.80px;width:223.50px;height:33.50px;background:#c0c0c0;box-shadow:inset 1.35px 1.35px 0 #fff,inset -1.35px -1.35px 0 #202020,inset -2.7px -2.7px 0 #808080;"></div><div class="t" style="left:1557.30px;top:163.60px;height:27px;line-height:27px;">Attribute/Value</div><div class="" style="left:1001.33px;top:194.00px;width:0.00px;height:342.28px;border-left:1.350px dotted #606060;"></div><div class="" style="left:1014.78px;top:219.30px;width:0.00px;height:227.94px;border-left:1.350px dotted #606060;"></div><div class="" style="left:1014.78px;top:486.42px;width:0.00px;height:20.18px;border-left:1.350px dotted #606060;"></div><svg style="position:absolute;left:996.70px;top:204.50px;" width="10.6" height="10.6" viewBox="0 0 10.6 10.6"><rect x="0.600" y="0.600" width="9.400" height="9.400" fill="#fff" stroke="#808080" stroke-width="1.200"/><path d="M2.600 5.300h5.400" stroke="#000" stroke-width="1.300"/></svg><svg style="position:absolute;left:1011.00px;top:198.30px;" width="23" height="24" viewBox="0 0 23 24"><text x="2.500" y="16.000" font-size="21.5" fill="#1e8c1e" font-family="Liberation Serif,serif" font-style="italic" font-weight="bold">f</text><text x="6.500" y="18.500" font-size="17" fill="#168a4a" font-family="Liberation Serif,serif" font-style="italic" font-weight="bold">x</text><text x="14.000" y="18.500" font-size="19" fill="#1e8c1e" font-family="Liberation Serif,serif" font-style="italic" font-weight="bold">t</text></svg><div class="t" style="left:1033.90px;top:195.50px;height:27px;line-height:27px;">Methods</div><div class="" style="left:1016.95px;top:238.81px;width:5.00px;height:0.00px;border-top:1.350px dotted #606060;"></div><svg style="position:absolute;left:1025.00px;top:227.98px;" width="23" height="24" viewBox="0 0 23 24"><text x="2.500" y="16.000" font-size="21.5" fill="#1e8c1e" font-family="Liberation Serif,serif" font-style="italic" font-weight="bold">f</text><text x="6.500" y="18.500" font-size="17" fill="#168a4a" font-family="Liberation Serif,serif" font-style="italic" font-weight="bold">x</text><path d="M13.5 2.500l2.300 5l2.300-5" stroke="#000" stroke-width="1.600" fill="none"/><path d="M12.7 2.300h1.800M17.1 2.300h1.800" stroke="#000" stroke-width="1.100"/></svg><div class="t" style="left:1047.70px;top:225.18px;height:27px;line-height:27px;">__m_uvm_field_aut...</div><div class="t" style="left:1303.60px;top:225.18px;height:27px;line-height:27px;">Function</div><div class="t" style="left:1554.20px;top:225.18px;height:27px;line-height:27px;">Virtual, Public</div><div class="" style="left:1016.95px;top:268.49px;width:5.00px;height:0.00px;border-top:1.350px dotted #606060;"></div><svg style="position:absolute;left:1025.00px;top:257.66px;" width="23" height="24" viewBox="0 0 23 24"><text x="2.500" y="16.000" font-size="21.5" fill="#1e8c1e" font-family="Liberation Serif,serif" font-style="italic" font-weight="bold">f</text><text x="6.500" y="18.500" font-size="17" fill="#168a4a" font-family="Liberation Serif,serif" font-style="italic" font-weight="bold">x</text><text x="14.000" y="18.500" font-size="19" fill="#1e8c1e" font-family="Liberation Serif,serif" font-style="italic" font-weight="bold">t</text><path d="M15.0 2.500l2.300 5l2.300-5" stroke="#000" stroke-width="1.600" fill="none"/><path d="M14.2 2.300h1.800M18.6 2.300h1.800" stroke="#000" stroke-width="1.100"/></svg><div class="t" style="left:1047.70px;top:254.86px;height:27px;line-height:27px;">body</div><div class="t" style="left:1303.60px;top:254.86px;height:27px;line-height:27px;">Task</div><div class="t" style="left:1554.20px;top:254.86px;height:27px;line-height:27px;">Virtual, Public</div><div class="" style="left:1016.95px;top:298.17px;width:5.00px;height:0.00px;border-top:1.350px dotted #606060;"></div><svg style="position:absolute;left:1025.00px;top:287.34px;" width="23" height="24" viewBox="0 0 23 24"><text x="2.500" y="16.000" font-size="21.5" fill="#1e8c1e" font-family="Liberation Serif,serif" font-style="italic" font-weight="bold">f</text><text x="6.500" y="18.500" font-size="17" fill="#168a4a" font-family="Liberation Serif,serif" font-style="italic" font-weight="bold">x</text><text x="14.000" y="18.500" font-size="19" fill="#1e8c1e" font-family="Liberation Serif,serif" font-style="italic" font-weight="bold">t</text></svg><div class="t" style="left:1047.70px;top:284.54px;height:27px;line-height:27px;">check_reg_ris_mis</div><div class="t" style="left:1303.60px;top:284.54px;height:27px;line-height:27px;">Task</div><div class="t" style="left:1554.20px;top:284.54px;height:27px;line-height:27px;">Public</div><div class="" style="left:1016.95px;top:327.84px;width:5.00px;height:0.00px;border-top:1.350px dotted #606060;"></div><svg style="position:absolute;left:1025.00px;top:317.02px;" width="23" height="24" viewBox="0 0 23 24"><text x="2.500" y="16.000" font-size="21.5" fill="#1e8c1e" font-family="Liberation Serif,serif" font-style="italic" font-weight="bold">f</text><text x="6.500" y="18.500" font-size="17" fill="#168a4a" font-family="Liberation Serif,serif" font-style="italic" font-weight="bold">x</text><path d="M13.5 2.500l2.300 5l2.300-5" stroke="#000" stroke-width="1.600" fill="none"/><path d="M12.7 2.300h1.800M17.1 2.300h1.800" stroke="#000" stroke-width="1.100"/></svg><div class="t" style="left:1047.70px;top:314.22px;height:27px;line-height:27px;">create</div><div class="t" style="left:1303.60px;top:314.22px;height:27px;line-height:27px;">Function</div><div class="t" style="left:1554.20px;top:314.22px;height:27px;line-height:27px;">Virtual, Public</div><div class="" style="left:1016.95px;top:357.53px;width:5.00px;height:0.00px;border-top:1.350px dotted #606060;"></div><svg style="position:absolute;left:1025.00px;top:346.70px;" width="23" height="24" viewBox="0 0 23 24"><text x="2.500" y="16.000" font-size="21.5" fill="#1e8c1e" font-family="Liberation Serif,serif" font-style="italic" font-weight="bold">f</text><text x="6.500" y="18.500" font-size="17" fill="#168a4a" font-family="Liberation Serif,serif" font-style="italic" font-weight="bold">x</text><path d="M13.5 2.500l2.300 5l2.300-5" stroke="#000" stroke-width="1.600" fill="none"/><path d="M12.7 2.300h1.800M17.1 2.300h1.800" stroke="#000" stroke-width="1.100"/></svg><div class="t" style="left:1047.70px;top:343.90px;height:27px;line-height:27px;">get_object_type</div><div class="t" style="left:1303.60px;top:343.90px;height:27px;line-height:27px;">Function</div><div class="t" style="left:1554.20px;top:343.90px;height:27px;line-height:27px;">Virtual, Public</div><div class="" style="left:1016.95px;top:387.20px;width:5.00px;height:0.00px;border-top:1.350px dotted #606060;"></div><svg style="position:absolute;left:1025.00px;top:376.38px;" width="23" height="24" viewBox="0 0 23 24"><text x="2.500" y="16.000" font-size="21.5" fill="#1e8c1e" font-family="Liberation Serif,serif" font-style="italic" font-weight="bold">f</text><text x="6.500" y="18.500" font-size="17" fill="#168a4a" font-family="Liberation Serif,serif" font-style="italic" font-weight="bold">x</text><path d="M13.5 7l2.600-5.500l2.600 5.500z" fill="#000"/></svg><div class="t" style="left:1047.70px;top:373.58px;height:27px;line-height:27px;">get_type</div><div class="t" style="left:1303.60px;top:373.58px;height:27px;line-height:27px;">Function</div><div class="t" style="left:1554.20px;top:373.58px;height:27px;line-height:27px;">Static, Public</div><div class="" style="left:1016.95px;top:416.88px;width:5.00px;height:0.00px;border-top:1.350px dotted #606060;"></div><svg style="position:absolute;left:1025.00px;top:406.06px;" width="23" height="24" viewBox="0 0 23 24"><text x="2.500" y="16.000" font-size="21.5" fill="#1e8c1e" font-family="Liberation Serif,serif" font-style="italic" font-weight="bold">f</text><text x="6.500" y="18.500" font-size="17" fill="#168a4a" font-family="Liberation Serif,serif" font-style="italic" font-weight="bold">x</text><path d="M13.5 2.500l2.300 5l2.300-5" stroke="#000" stroke-width="1.600" fill="none"/><path d="M12.7 2.300h1.800M17.1 2.300h1.800" stroke="#000" stroke-width="1.100"/></svg><div class="t" style="left:1047.70px;top:403.26px;height:27px;line-height:27px;">get_type_name</div><div class="t" style="left:1303.60px;top:403.26px;height:27px;line-height:27px;">Function</div><div class="t" style="left:1554.20px;top:403.26px;height:27px;line-height:27px;">Virtual, Public</div><div class="" style="left:1016.95px;top:446.56px;width:5.00px;height:0.00px;border-top:1.350px dotted #606060;"></div><svg style="position:absolute;left:1025.00px;top:435.74px;" width="23" height="24" viewBox="0 0 23 24"><text x="2.500" y="16.000" font-size="21.5" fill="#1e8c1e" font-family="Liberation Serif,serif" font-style="italic" font-weight="bold">f</text><text x="6.500" y="18.500" font-size="17" fill="#168a4a" font-family="Liberation Serif,serif" font-style="italic" font-weight="bold">x</text></svg><div class="t" style="left:1047.70px;top:432.94px;height:27px;line-height:27px;">new</div><div class="t" style="left:1303.60px;top:432.94px;height:27px;line-height:27px;">Function</div><div class="t" style="left:1554.20px;top:432.94px;height:27px;line-height:27px;">Public</div><svg style="position:absolute;left:996.70px;top:471.62px;" width="10.6" height="10.6" viewBox="0 0 10.6 10.6"><rect x="0.600" y="0.600" width="9.400" height="9.400" fill="#fff" stroke="#808080" stroke-width="1.200"/><path d="M2.600 5.300h5.400" stroke="#000" stroke-width="1.300"/></svg><svg style="position:absolute;left:1016.50px;top:470.92px;" width="8" height="13" viewBox="0 0 8 13"><rect x="0.800" y="0.800" width="5.500" height="10.800" fill="#c0c0c0" stroke="#000" stroke-width="1.400"/></svg><div class="t" style="left:1033.90px;top:462.62px;height:27px;line-height:27px;">Variables</div><div class="" style="left:1016.95px;top:505.93px;width:5.00px;height:0.00px;border-top:1.350px dotted #606060;"></div><svg style="position:absolute;left:1030.00px;top:497.60px;" width="17" height="17" viewBox="0 0 17 17"><rect x="0.800" y="4.800" width="5" height="10.500" fill="#c0c0c0" stroke="#000" stroke-width="1.400"/><path d="M8.500 6.500l2.800-5.500l2.800 5.500z" fill="#000"/></svg><div class="t" style="left:1047.70px;top:492.30px;height:27px;line-height:27px;">type_name</div><div class="t" style="left:1303.60px;top:492.30px;height:27px;line-height:27px;">String</div><div class="t" style="left:1554.20px;top:492.30px;height:27px;line-height:27px;">Static, Public</div><div class="" style="left:1002.00px;top:535.61px;width:7.00px;height:0.00px;border-top:1.350px dotted #606060;"></div><svg style="position:absolute;left:1014.50px;top:528.28px;" width="10" height="17" viewBox="0 0 10 17"><path d="M1 1.200h8M1 15.500h8" stroke="#0000ff" stroke-width="1.800"/><path d="M5 1.500v14" stroke="#0000ff" stroke-width="3.200"/><path d="M5 5v7" stroke="#fff" stroke-width="1"/></svg><div class="t" style="left:1033.90px;top:521.98px;height:27px;line-height:27px;">Constraints</div><div class="" style="left:984.30px;top:73.00px;width:1.70px;height:1184.00px;background:#fff"></div><div class="" style="left:987.80px;top:73.00px;width:2.20px;height:1184.00px;background:#404040"></div><div class="" style="left:1779.80px;top:73.00px;width:1.70px;height:1193.00px;background:#fff"></div><div class="" style="left:1783.30px;top:73.00px;width:1.90px;height:1193.00px;background:#404040"></div><div class="" style="left:1785.20px;top:72.60px;width:1660.80px;height:6.80px;background:#000080"></div><div class="" style="left:1897.00px;top:82.40px;width:1549.00px;height:2.60px;background:#303030"></div><div class="" style="left:1897.00px;top:82.40px;width:2.10px;height:1105.00px;background:#383838"></div><div class="" style="left:1899.60px;top:85.00px;width:1530.20px;height:1101.60px;background:#d4d4d4;"></div><div class="" style="left:1897.00px;top:1186.60px;width:1549.00px;height:1.50px;background:#fff"></div><div class="" style="left:1899.60px;top:357.60px;width:1530.20px;height:486.40px;background:#fff"></div><div class="t" style="left:1834.60px;top:88.60px;height:27px;line-height:27px;">2</div><div class="t" style="left:1904.50px;top:88.60px;height:27px;line-height:27px;"><span class="k">`define</span> <span class="i">APB_WATCHDOG_DISABLE_INTR_VIRT_SEQ_SV</span></div><div class="t" style="left:1834.60px;top:115.60px;height:27px;line-height:27px;">3</div><div class="t" style="left:1834.60px;top:142.60px;height:27px;line-height:27px;">4</div><div class="t" style="left:1928.80px;top:142.60px;height:27px;line-height:27px;"><span class="k">class</span> <span class="i">apb_watchdog_disable_intr_virt_seq</span> <span class="k">extends</span> <span class="i">apb_watchdog_base_virt_seq</span>;</div><div class="t" style="left:1834.60px;top:169.60px;height:27px;line-height:27px;">5</div><div class="t" style="left:1834.60px;top:196.60px;height:27px;line-height:27px;">6</div><div class="t" style="left:1953.10px;top:196.60px;height:27px;line-height:27px;"><span class="m">`uvm_object_utils</span>(<span class="i">apb_watchdog_disable_intr_virt_seq</span>)</div><div class="t" style="left:1834.60px;top:223.60px;height:27px;line-height:27px;">7</div><div class="t" style="left:1834.60px;top:250.60px;height:27px;line-height:27px;">8</div><div class="t" style="left:1953.10px;top:250.60px;height:27px;line-height:27px;"><span class="k">function</span> <span class="k">new</span>(<span class="k">string</span> <span class="i">name</span> = "apb_watchdog_disable_intr_virt_seq");</div><div class="t" style="left:1834.60px;top:277.60px;height:27px;line-height:27px;">9</div><div class="t" style="left:1977.40px;top:277.60px;height:27px;line-height:27px;"><span class="k">super</span>.<span class="k">new</span>(<span class="i">name</span>);</div><div class="t" style="left:1834.60px;top:304.60px;height:27px;line-height:27px;">10</div><div class="t" style="left:1953.10px;top:304.60px;height:27px;line-height:27px;"><span class="k">endfunction</span></div><div class="t" style="left:1834.60px;top:331.60px;height:27px;line-height:27px;">11</div><div class="t" style="left:1834.60px;top:358.60px;height:27px;line-height:27px;">12</div><div class="t" style="left:1953.10px;top:358.60px;height:27px;line-height:27px;"><span class="k">virtual</span> <span class="k">task</span> <span class="i">body</span>();</div><div class="t" style="left:1834.60px;top:385.60px;height:27px;line-height:27px;">13</div><div class="t" style="left:1977.40px;top:385.60px;height:27px;line-height:27px;"><span class="k">super</span>.<span class="i">body</span>();</div><div class="t" style="left:1834.60px;top:412.60px;height:27px;line-height:27px;">14</div><div class="t" style="left:1977.40px;top:412.60px;height:27px;line-height:27px;"><span class="m">`uvm_info</span>("body","Entered...",<span class="r">UVM_LOW</span>)</div><div class="t" style="left:1834.60px;top:439.60px;height:27px;line-height:27px;">15</div><div class="t" style="left:1989.55px;top:439.60px;height:27px;line-height:27px;"><span class="c">// Enable apb_watchdog_reg and its interrupt generation</span></div><div class="t" style="left:1834.60px;top:466.60px;height:27px;line-height:27px;">16</div><div class="t" style="left:1989.55px;top:466.60px;height:27px;line-height:27px;"><span class="m">`uvm_do</span>(<span class="i">reg_en_intr</span>)</div><div class="t" style="left:1834.60px;top:493.60px;height:27px;line-height:27px;">17</div><div class="t" style="left:1989.55px;top:493.60px;height:27px;line-height:27px;"><span class="c">// Get load_val</span></div><div class="t" style="left:1834.60px;top:520.60px;height:27px;line-height:27px;">18</div><div class="t" style="left:1989.55px;top:520.60px;height:27px;line-height:27px;"><span class="m">`uvm_do_with</span>(<span class="i">reg_loadcount</span>, {<span class="i">load_val</span> == 'hFF;})</div><div class="t" style="left:1834.60px;top:547.60px;height:27px;line-height:27px;">19</div><div class="t" style="left:1989.55px;top:547.60px;height:27px;line-height:27px;"><span class="i">wait_int_asserted</span>();<span class="c">// wait interrupt signal high</span></div><div class="t" style="left:1834.60px;top:574.60px;height:27px;line-height:27px;">20</div><div class="t" style="left:1989.55px;top:574.60px;height:27px;line-height:27px;"><span class="i">check_reg_ris_mis</span>(1'b1, 1'b1);</div><div class="t" style="left:1834.60px;top:601.60px;height:27px;line-height:27px;">21</div><div class="t" style="left:1989.55px;top:601.60px;height:27px;line-height:27px;"><span class="k">repeat</span>(20) @(<span class="k">posedge</span> <span class="i">vif</span>.<span class="i">wdg_clk</span>)</div><div class="t" style="left:1834.60px;top:628.60px;height:27px;line-height:27px;">22</div><div class="t" style="left:1989.55px;top:628.60px;height:27px;line-height:27px;"><span class="k">fork</span></div><div class="t" style="left:1834.60px;top:655.60px;height:27px;line-height:27px;">23</div><div class="t" style="left:2026.00px;top:655.60px;height:27px;line-height:27px;"><span class="m">`uvm_do</span>(<span class="i">reg_dis_intr</span>) <span class="c">// disable reg_dis_intr</span></div><div class="t" style="left:1834.60px;top:682.60px;height:27px;line-height:27px;">24</div><div class="t" style="left:2026.00px;top:682.60px;height:27px;line-height:27px;"><span class="i">wait_int_released</span>(); <span class="c">// wait interrupt signal released</span></div><div class="t" style="left:1834.60px;top:709.60px;height:27px;line-height:27px;">25</div><div class="t" style="left:1989.55px;top:709.60px;height:27px;line-height:27px;"><span class="k">join</span></div><div class="t" style="left:1834.60px;top:736.60px;height:27px;line-height:27px;">26</div><div class="t" style="left:1989.55px;top:736.60px;height:27px;line-height:27px;"><span class="i">check_reg_ris_mis</span>(1'b1, 1'b0);</div><div class="t" style="left:1834.60px;top:763.60px;height:27px;line-height:27px;">27</div><div class="t" style="left:1989.55px;top:763.60px;height:27px;line-height:27px;">#1us; <span class="c">// idle time monitoring count</span></div><div class="t" style="left:1834.60px;top:790.60px;height:27px;line-height:27px;">28</div><div class="t" style="left:1989.55px;top:790.60px;height:27px;line-height:27px;"><span class="m">`uvm_info</span>("body", "EXited...", <span class="r">UVM_LOW</span>)</div><div class="t" style="left:1834.60px;top:817.60px;height:27px;line-height:27px;">29</div><div class="t" style="left:1953.10px;top:817.60px;height:27px;line-height:27px;"><span class="k">endtask</span></div><div class="t" style="left:1834.60px;top:844.60px;height:27px;line-height:27px;">30</div><div class="t" style="left:1834.60px;top:871.60px;height:27px;line-height:27px;">31</div><div class="t" style="left:1953.10px;top:871.60px;height:27px;line-height:27px;"><span class="k">task</span> <span class="i">check_reg_ris_mis</span>(<span class="k">input</span> <span class="i">ris</span>, <span class="k">input</span> <span class="i">mis</span>);</div><div class="t" style="left:1834.60px;top:898.60px;height:27px;line-height:27px;">32</div><div class="t" style="left:1977.40px;top:898.60px;height:27px;line-height:27px;"><span class="i">rgm</span>.<span class="i">WDOGRIS</span>.<span class="i">mirror</span>(<span class="i">status</span>);</div><div class="t" style="left:1834.60px;top:925.60px;height:27px;line-height:27px;">33</div><div class="t" style="left:1977.40px;top:925.60px;height:27px;line-height:27px;"><span class="i">compare_data</span>(<span class="i">ris</span>, <span class="i">rgm</span>.<span class="i">WDOGRIS</span>.<span class="i">RAWINT</span>.<span class="i">get</span>());</div><div class="t" style="left:1834.60px;top:952.60px;height:27px;line-height:27px;">34</div><div class="t" style="left:1977.40px;top:952.60px;height:27px;line-height:27px;"><span class="i">rgm</span>.<span class="i">WDOGMIS</span>.<span class="i">mirror</span>(<span class="i">status</span>);</div><div class="t" style="left:1834.60px;top:979.60px;height:27px;line-height:27px;">35</div><div class="t" style="left:1977.40px;top:979.60px;height:27px;line-height:27px;"><span class="i">compare_data</span>(<span class="i">mis</span>, <span class="i">rgm</span>.<span class="i">WDOGMIS</span>.<span class="i">INT</span>.<span class="i">get</span>());</div><div class="t" style="left:1834.60px;top:1006.60px;height:27px;line-height:27px;">36</div><div class="t" style="left:1953.10px;top:1006.60px;height:27px;line-height:27px;"><span class="k">endtask</span></div><div class="t" style="left:1834.60px;top:1033.60px;height:27px;line-height:27px;">37</div><div class="t" style="left:1834.60px;top:1060.60px;height:27px;line-height:27px;">38</div><div class="t" style="left:1928.80px;top:1060.60px;height:27px;line-height:27px;"><span class="k">endclass</span></div><div class="t" style="left:1834.60px;top:1087.60px;height:27px;line-height:27px;">39</div><div class="t" style="left:1834.60px;top:1114.60px;height:27px;line-height:27px;">40</div><div class="t" style="left:1904.50px;top:1114.60px;height:27px;line-height:27px;"><span class="k">`endif</span> <span class="c">//APB_WATCHDOG_DISABLE_INTR_VIRT_SEQ_SV</span></div><div class="t" style="left:1834.60px;top:1141.60px;height:27px;line-height:27px;">41</div><svg style="position:absolute;left:1883.80px;top:149.70px;" width="10.8" height="10.8" viewBox="0 0 10.8 10.8"><rect x="0.700" y="0.700" width="9.400" height="9.400" fill="#fff" stroke="#000" stroke-width="1.400"/><rect x="2.800" y="4" width="5.200" height="2.800" fill="#000"/></svg><svg style="position:absolute;left:1883.80px;top:203.70px;" width="10.8" height="10.8" viewBox="0 0 10.8 10.8"><rect x="0.700" y="0.700" width="9.400" height="9.400" fill="#fff" stroke="#000" stroke-width="1.400"/><path d="M5.400 0.500v10M0.500 5.400h10" stroke="#000" stroke-width="2"/></svg><svg style="position:absolute;left:1883.80px;top:419.70px;" width="10.8" height="10.8" viewBox="0 0 10.8 10.8"><rect x="0.700" y="0.700" width="9.400" height="9.400" fill="#fff" stroke="#000" stroke-width="1.400"/><path d="M5.400 0.500v10M0.500 5.400h10" stroke="#000" stroke-width="2"/></svg><svg style="position:absolute;left:1883.80px;top:473.70px;" width="10.8" height="10.8" viewBox="0 0 10.8 10.8"><rect x="0.700" y="0.700" width="9.400" height="9.400" fill="#fff" stroke="#000" stroke-width="1.400"/><path d="M5.400 0.500v10M0.500 5.400h10" stroke="#000" stroke-width="2"/></svg><svg style="position:absolute;left:1883.80px;top:527.70px;" width="10.8" height="10.8" viewBox="0 0 10.8 10.8"><rect x="0.700" y="0.700" width="9.400" height="9.400" fill="#fff" stroke="#000" stroke-width="1.400"/><path d="M5.400 0.500v10M0.500 5.400h10" stroke="#000" stroke-width="2"/></svg><svg style="position:absolute;left:1883.80px;top:662.70px;" width="10.8" height="10.8" viewBox="0 0 10.8 10.8"><rect x="0.700" y="0.700" width="9.400" height="9.400" fill="#fff" stroke="#000" stroke-width="1.400"/><path d="M5.400 0.500v10M0.500 5.400h10" stroke="#000" stroke-width="2"/></svg><svg style="position:absolute;left:1883.80px;top:797.70px;" width="10.8" height="10.8" viewBox="0 0 10.8 10.8"><rect x="0.700" y="0.700" width="9.400" height="9.400" fill="#fff" stroke="#000" stroke-width="1.400"/><path d="M5.400 0.500v10M0.500 5.400h10" stroke="#000" stroke-width="2"/></svg><svg style="position:absolute;left:1805.00px;top:552.30px;" width="13" height="13" viewBox="0 0 13 13"><circle cx="6.500" cy="6.500" r="5.500" fill="#b00000" stroke="#800000" stroke-width="0.800"/></svg><svg style="position:absolute;left:1805.00px;top:579.30px;" width="13" height="13" viewBox="0 0 13 13"><circle cx="6.500" cy="6.500" r="5.500" fill="#b00000" stroke="#800000" stroke-width="0.800"/></svg><svg style="position:absolute;left:1805.00px;top:606.30px;" width="13" height="13" viewBox="0 0 13 13"><circle cx="6.500" cy="6.500" r="5.500" fill="#b00000" stroke="#800000" stroke-width="0.800"/></svg><svg style="position:absolute;left:1805.00px;top:660.30px;" width="13" height="13" viewBox="0 0 13 13"><circle cx="6.500" cy="6.500" r="5.500" fill="#b00000" stroke="#800000" stroke-width="0.800"/></svg><svg style="position:absolute;left:1805.00px;top:687.30px;" width="13" height="13" viewBox="0 0 13 13"><circle cx="6.500" cy="6.500" r="5.500" fill="#b00000" stroke="#800000" stroke-width="0.800"/></svg><svg style="position:absolute;left:1805.00px;top:741.30px;" width="13" height="13" viewBox="0 0 13 13"><circle cx="6.500" cy="6.500" r="5.500" fill="#b00000" stroke="#800000" stroke-width="0.800"/></svg><svg style="position:absolute;left:1805.00px;top:633.70px;" width="13" height="13" viewBox="0 0 13 13"><circle cx="6.500" cy="6.500" r="4.900" fill="#fff" stroke="#c00000" stroke-width="1.500"/></svg><svg style="position:absolute;left:1787.50px;top:606.70px;" width="16" height="13" viewBox="0 0 16 13"><path d="M0.800 4h7.500v-3.200l6.200 5.700l-6.200 5.700v-3.200h-7.500z" fill="#ffff00" stroke="#000" stroke-width="1.300"/></svg><div class="" style="left:3429.60px;top:86.00px;width:20.60px;height:1100.00px;background:#d9d9d9;background-image:conic-gradient(#c0c0c0 25%,#fff 0 50%,#c0c0c0 0 75%,#fff 0);background-size:2.700px 2.700px;"></div><div class="" style="left:3429.60px;top:86.00px;width:20.60px;height:19.80px;background:#c0c0c0;box-shadow:inset 1.35px 1.35px 0 #fff,inset -1.35px -1.35px 0 #202020,inset -2.7px -2.7px 0 #808080;"></div><svg style="position:absolute;left:3429.60px;top:86.00px;" width="16.4" height="19.8" viewBox="0 0 16.4 19.8"><path d="M5.400 12.300h10l-5-5.600z" fill="#000"/></svg><div class="" style="left:3429.60px;top:131.40px;width:20.60px;height:1007.60px;background:#c0c0c0;box-shadow:inset 1.35px 1.35px 0 #fff,inset -1.35px -1.35px 0 #202020,inset -2.7px -2.7px 0 #808080;"></div><div class="" style="left:3429.60px;top:1166.00px;width:20.60px;height:19.60px;background:#c0c0c0;box-shadow:inset 1.35px 1.35px 0 #fff,inset -1.35px -1.35px 0 #202020,inset -2.7px -2.7px 0 #808080;"></div><svg style="position:absolute;left:3429.60px;top:1166.00px;" width="16.4" height="19.6" viewBox="0 0 16.4 19.6"><path d="M5.400 7.200h10l-5 5.600z" fill="#000"/></svg><div class="" style="left:1785.20px;top:1188.20px;width:1660.80px;height:1.35px;background:#808080"></div><div class="" style="left:1785.20px;top:1189.55px;width:1660.80px;height:1.35px;background:#fff"></div><div class="" style="left:1787.00px;top:1190.50px;width:109.50px;height:34.00px;box-shadow:inset 1.35px 1.35px 0 #fff,inset -1.35px -1.35px 0 #404040;"></div><div class="" style="left:1788.60px;top:1199.60px;width:16.40px;height:16.40px;background:#fff;box-shadow:inset 1.35px 1.35px 0 #808080,inset -1.35px -1.35px 0 #fff,inset 2.7px 2.7px 0 #101010,inset -2.7px -2.7px 0 #c0c0c0;"></div><svg style="position:absolute;left:1788.60px;top:1199.60px;" width="16.4" height="16.4" viewBox="0 0 16.4 16.4"><path d="M3.800 7.500l2.800 3.200l5.800-6.500" stroke="#000" stroke-width="2.400" fill="none"/></svg><div class="t" style="left:1813.20px;top:1194.60px;height:27px;line-height:27px;">Goto</div><svg style="position:absolute;left:1874.50px;top:1202.50px;" width="17" height="13" viewBox="0 0 17 13"><path d="M0.800 4h7.500v-3.200l6.800 5.700l-6.800 5.700v-3.200h-7.500z" fill="#ffff00" stroke="#000" stroke-width="1.300"/></svg><div class="" style="left:1897.00px;top:1192.00px;width:1384.00px;height:32.60px;background:#c0c0c0;box-shadow:inset 1.35px 1.35px 0 #808080,inset -1.35px -1.35px 0 #fff,inset 2.7px 2.7px 0 #101010,inset -2.7px -2.7px 0 #c0c0c0;"></div><div class="t" style="left:1902.40px;top:1195.00px;height:27px;line-height:27px;letter-spacing:-0.025px;">/home/verifier/milanotang/v2xlab/uvm/sim/../seq_lib/apb_watchdog_disable_intr_virt_seq.sv</div><div class="" style="left:3283.30px;top:1192.00px;width:70.00px;height:32.60px;background:#fff;box-shadow:inset 1.35px 1.35px 0 #808080,inset -1.35px -1.35px 0 #fff,inset 2.7px 2.7px 0 #101010,inset -2.7px -2.7px 0 #c0c0c0;"></div><div class="" style="left:3361.30px;top:1199.60px;width:16.40px;height:16.40px;background:#fff;box-shadow:inset 1.35px 1.35px 0 #808080,inset -1.35px -1.35px 0 #fff,inset 2.7px 2.7px 0 #101010,inset -2.7px -2.7px 0 #c0c0c0;"></div><svg style="position:absolute;left:3361.30px;top:1199.60px;" width="16.4" height="16.4" viewBox="0 0 16.4 16.4"><path d="M3.800 7.500l2.800 3.200l5.800-6.500" stroke="#000" stroke-width="2.400" fill="none"/></svg><div class="t" style="left:3385.20px;top:1194.60px;height:27px;line-height:27px;">Reuse</div><div class="" style="left:1787.40px;top:1230.30px;width:340.50px;height:35.20px;background:#c0c0c0;box-shadow:inset 1.35px 1.35px 0 #fff,inset -1.35px -1.35px 0 #202020,inset -2.7px -2.7px 0 #808080;"></div><svg style="position:absolute;left:1795.00px;top:1239.50px;" width="20" height="18" viewBox="0 0 20 18"><rect x="0.800" y="0.800" width="17.500" height="15.500" fill="#fff" stroke="#000" stroke-width="1.400"/><rect x="1" y="1" width="17" height="3" fill="#000060"/><path d="M3.500 7.500h5M10 7.500h5M3.500 10.500h11M3.500 13.500h11" stroke="#505050" stroke-width="1.200"/></svg><div class="t" style="left:1821.20px;top:1234.40px;height:27px;line-height:27px;">apb_watchdog_disable...</div><svg style="position:absolute;left:2106.00px;top:1243.00px;" width="12" height="12" viewBox="0 0 12 12"><path d="M1.500 1.500l8.500 8.500M10 1.500l-8.500 8.500" stroke="#606060" stroke-width="1.600"/></svg><div class="" style="left:0.00px;top:1259.80px;width:1785.00px;height:2.20px;background:#404040"></div><div class="" style="left:0.00px;top:1267.20px;width:3446.00px;height:2.30px;background:#fff"></div><div class="" style="left:0.00px;top:1271.00px;width:3446.00px;height:2.10px;background:#404040"></div><div class="" style="left:23.30px;top:1273.60px;width:1.50px;height:41.00px;background:#fff"></div><div class="" style="left:23.30px;top:1273.60px;width:3446.00px;height:1.30px;background:#e0e0e0"></div><div class="" style="left:1.20px;top:1275.80px;width:16.40px;height:16.20px;background:#c0c0c0;box-shadow:inset 1.35px 1.35px 0 #fff,inset -1.35px -1.35px 0 #202020,inset -2.7px -2.7px 0 #808080;"></div><svg style="position:absolute;left:1.20px;top:1275.80px;" width="16.4" height="16.2" viewBox="0 0 16.4 16.2"><path d="M4.500 4.500l7 7M11.500 4.500l-7 7" stroke="#000" stroke-width="1.800"/></svg><div class="" style="left:6.50px;top:1295.50px;width:1.35px;height:20.00px;background:#fff"></div><div class="" style="left:7.85px;top:1295.50px;width:1.35px;height:20.00px;background:#808080"></div><div class="" style="left:10.80px;top:1295.50px;width:1.35px;height:20.00px;background:#fff"></div><div class="" style="left:12.15px;top:1295.50px;width:1.35px;height:20.00px;background:#808080"></div><div class="t" style="left:26.20px;top:1283.10px;height:27px;line-height:27px;"><u>T</u>ype:</div><div class="" style="left:96.30px;top:1277.20px;width:63.80px;height:32.20px;background:#fff;box-shadow:inset 1.35px 1.35px 0 #808080,inset -1.35px -1.35px 0 #fff,inset 2.7px 2.7px 0 #101010,inset -2.7px -2.7px 0 #c0c0c0;"></div><svg style="position:absolute;left:100.50px;top:1285.50px;" width="26" height="17" viewBox="0 0 26 17"><path d="M1 4.500h8M1 12.500h8" stroke="#1a9a1a" stroke-width="1.300"/><path d="M6 1.500l3.300 3l-3.300 3M6 9.500l3.300 3l-3.300 3" stroke="#1a9a1a" stroke-width="1.300" fill="none"/><path d="M12 1v15.500" stroke="#333" stroke-width="1.400"/><path d="M14.500 4.500h8M14.500 12.500h8" stroke="#1a9a1a" stroke-width="1.300"/><path d="M19.500 1.500l3.300 3l-3.300 3M19.500 9.500l3.300 3l-3.300 3" stroke="#1a9a1a" stroke-width="1.300" fill="none"/></svg><div class="" style="left:139.00px;top:1279.90px;width:18.80px;height:26.80px;background:#c0c0c0;box-shadow:inset 1.35px 1.35px 0 #fff,inset -1.35px -1.35px 0 #202020,inset -2.7px -2.7px 0 #808080;"></div><svg style="position:absolute;left:143.30px;top:1290.90px;" width="10.2" height="5.8" viewBox="0 0 10.2 5.8"><polygon points="0,0 10.2,0 5.1,5.8" fill="#000"/></svg><div class="t" style="left:171.00px;top:1283.10px;height:27px;line-height:27px;"><u>S</u>everity:</div><div class="" style="left:289.20px;top:1277.20px;width:63.50px;height:32.20px;background:#fff;box-shadow:inset 1.35px 1.35px 0 #808080,inset -1.35px -1.35px 0 #fff,inset 2.7px 2.7px 0 #101010,inset -2.7px -2.7px 0 #c0c0c0;"></div><svg style="position:absolute;left:293.50px;top:1285.50px;" width="26" height="17" viewBox="0 0 26 17"><path d="M1 4.500h8M1 12.500h8" stroke="#1a9a1a" stroke-width="1.300"/><path d="M6 1.500l3.300 3l-3.300 3M6 9.500l3.300 3l-3.300 3" stroke="#1a9a1a" stroke-width="1.300" fill="none"/><path d="M12 1v15.500" stroke="#333" stroke-width="1.400"/><path d="M14.500 4.500h8M14.500 12.500h8" stroke="#1a9a1a" stroke-width="1.300"/><path d="M19.500 1.500l3.300 3l-3.300 3M19.500 9.500l3.300 3l-3.300 3" stroke="#1a9a1a" stroke-width="1.300" fill="none"/></svg><div class="" style="left:331.80px;top:1279.90px;width:18.80px;height:26.80px;background:#c0c0c0;box-shadow:inset 1.35px 1.35px 0 #fff,inset -1.35px -1.35px 0 #202020,inset -2.7px -2.7px 0 #808080;"></div><svg style="position:absolute;left:336.10px;top:1290.90px;" width="10.2" height="5.8" viewBox="0 0 10.2 5.8"><polygon points="0,0 10.2,0 5.1,5.8" fill="#000"/></svg><div class="t" style="left:363.00px;top:1283.10px;height:27px;line-height:27px;"><u>C</u>ode:</div><div class="" style="left:434.00px;top:1277.20px;width:238.60px;height:32.20px;background:#fff;box-shadow:inset 1.35px 1.35px 0 #808080,inset -1.35px -1.35px 0 #fff,inset 2.7px 2.7px 0 #101010,inset -2.7px -2.7px 0 #c0c0c0;"></div><div class="t" style="left:439.60px;top:1283.10px;height:27px;line-height:27px;">All</div><div class="" style="left:651.80px;top:1279.90px;width:18.80px;height:26.80px;background:#c0c0c0;box-shadow:inset 1.35px 1.35px 0 #fff,inset -1.35px -1.35px 0 #202020,inset -2.7px -2.7px 0 #808080;"></div><svg style="position:absolute;left:656.10px;top:1290.90px;" width="10.2" height="5.8" viewBox="0 0 10.2 5.8"><polygon points="0,0 10.2,0 5.1,5.8" fill="#000"/></svg><svg style="position:absolute;left:689.00px;top:1284.50px;" width="20" height="20" viewBox="0 0 20 20"><circle cx="10" cy="10" r="8.500" fill="#b0b0b0" stroke="#909090" stroke-width="1.500"/><path d="M3.500 14.500l6.500-10l6.500 10z" fill="none" stroke="#989898" stroke-width="1.300"/></svg><svg style="position:absolute;left:729.50px;top:1286.00px;" width="13" height="17" viewBox="0 0 13 17"><path d="M12 1l-10.500 7.500l10.500 7.500z" fill="#4080f0" stroke="#2050c0" stroke-width="1"/></svg><svg style="position:absolute;left:767.50px;top:1286.00px;" width="13" height="17" viewBox="0 0 13 17"><path d="M1 1l10.500 7.500l-10.500 7.500z" fill="none" stroke="#3060e0" stroke-width="1.500"/></svg></div></body></html>
